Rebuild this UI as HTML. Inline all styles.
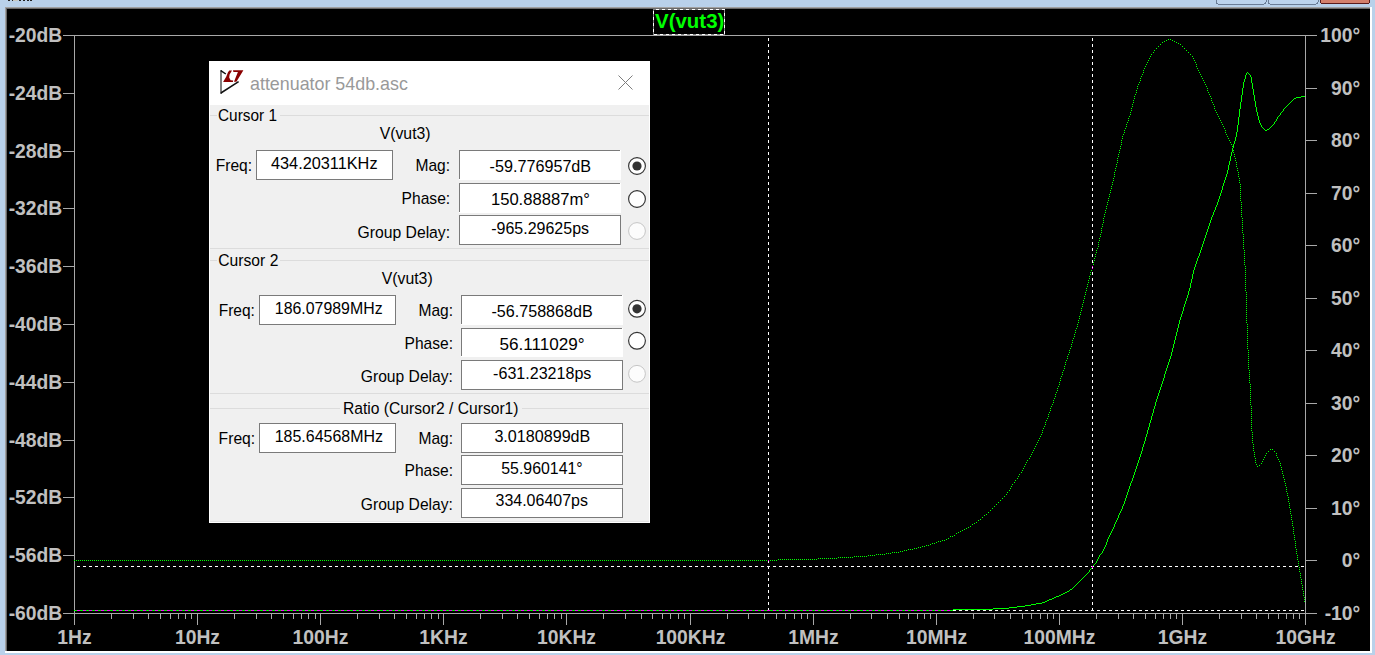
<!DOCTYPE html><html><head><meta charset="utf-8"><style>
html,body{margin:0;padding:0;}
body{width:1375px;height:655px;overflow:hidden;position:relative;background:#b9d1ea;font-family:"Liberation Sans",sans-serif;}
svg{position:absolute;left:0;top:0;}
</style></head><body>

<svg width="1375" height="655" viewBox="0 0 1375 655" shape-rendering="crispEdges">
<rect x="0" y="0" width="1375" height="655" fill="#b9d1ea"/>
<rect x="8" y="0" width="2" height="1" fill="#222"/>
<rect x="12" y="0" width="2" height="1" fill="#222"/>
<rect x="19" y="0" width="2" height="1" fill="#222"/>
<rect x="23" y="0" width="2" height="1" fill="#222"/>
<rect x="27" y="0" width="2" height="1" fill="#222"/>
<rect x="30" y="0" width="2" height="1" fill="#222"/>
<rect x="13" y="0" width="5" height="1" fill="#c8c8c0"/>
<rect x="1216" y="-4" width="50" height="8" rx="2" fill="#bcd3ec" stroke="#6b7d96" stroke-width="1"/>
<rect x="1268" y="-4" width="50" height="8" rx="2" fill="#bcd3ec" stroke="#6b7d96" stroke-width="1"/>
<rect x="1320.5" y="-4" width="49" height="7.5" rx="2" fill="#d4806c" stroke="#5a1c1c" stroke-width="1"/>
<rect x="5" y="7" width="1367" height="646" fill="#ffffff"/>
<rect x="5" y="7" width="1365" height="644" fill="#a0a0a0"/>
<rect x="6" y="8" width="1364" height="643" fill="#696969"/>
<rect x="7" y="9" width="1363" height="642" fill="#000"/>
<rect x="74" y="35" width="1232" height="1" fill="#a8a8a8"/>
<rect x="74" y="613" width="1232" height="1" fill="#a8a8a8"/>
<rect x="74" y="35" width="1" height="590" fill="#a8a8a8"/>
<rect x="1305" y="35" width="1" height="590" fill="#a8a8a8"/>
<rect x="63" y="35" width="11" height="1" fill="#a8a8a8"/>
<rect x="63" y="93" width="11" height="1" fill="#a8a8a8"/>
<rect x="63" y="151" width="11" height="1" fill="#a8a8a8"/>
<rect x="63" y="208" width="11" height="1" fill="#a8a8a8"/>
<rect x="63" y="266" width="11" height="1" fill="#a8a8a8"/>
<rect x="63" y="324" width="11" height="1" fill="#a8a8a8"/>
<rect x="63" y="382" width="11" height="1" fill="#a8a8a8"/>
<rect x="63" y="440" width="11" height="1" fill="#a8a8a8"/>
<rect x="63" y="497" width="11" height="1" fill="#a8a8a8"/>
<rect x="63" y="555" width="11" height="1" fill="#a8a8a8"/>
<rect x="63" y="613" width="11" height="1" fill="#a8a8a8"/>
<rect x="1306" y="35" width="11" height="1" fill="#a8a8a8"/>
<rect x="1306" y="88" width="11" height="1" fill="#a8a8a8"/>
<rect x="1306" y="140" width="11" height="1" fill="#a8a8a8"/>
<rect x="1306" y="193" width="11" height="1" fill="#a8a8a8"/>
<rect x="1306" y="245" width="11" height="1" fill="#a8a8a8"/>
<rect x="1306" y="298" width="11" height="1" fill="#a8a8a8"/>
<rect x="1306" y="350" width="11" height="1" fill="#a8a8a8"/>
<rect x="1306" y="403" width="11" height="1" fill="#a8a8a8"/>
<rect x="1306" y="455" width="11" height="1" fill="#a8a8a8"/>
<rect x="1306" y="508" width="11" height="1" fill="#a8a8a8"/>
<rect x="1306" y="560" width="11" height="1" fill="#a8a8a8"/>
<rect x="1306" y="613" width="11" height="1" fill="#a8a8a8"/>
<rect x="74" y="613" width="1" height="12" fill="#a8a8a8"/>
<rect x="111" y="614" width="1" height="5" fill="#a8a8a8"/>
<rect x="133" y="614" width="1" height="5" fill="#a8a8a8"/>
<rect x="148" y="614" width="1" height="5" fill="#a8a8a8"/>
<rect x="160" y="614" width="1" height="5" fill="#a8a8a8"/>
<rect x="170" y="614" width="1" height="5" fill="#a8a8a8"/>
<rect x="178" y="614" width="1" height="5" fill="#a8a8a8"/>
<rect x="185" y="614" width="1" height="5" fill="#a8a8a8"/>
<rect x="191" y="614" width="1" height="5" fill="#a8a8a8"/>
<rect x="197" y="613" width="1" height="12" fill="#a8a8a8"/>
<rect x="234" y="614" width="1" height="5" fill="#a8a8a8"/>
<rect x="256" y="614" width="1" height="5" fill="#a8a8a8"/>
<rect x="271" y="614" width="1" height="5" fill="#a8a8a8"/>
<rect x="283" y="614" width="1" height="5" fill="#a8a8a8"/>
<rect x="293" y="614" width="1" height="5" fill="#a8a8a8"/>
<rect x="301" y="614" width="1" height="5" fill="#a8a8a8"/>
<rect x="308" y="614" width="1" height="5" fill="#a8a8a8"/>
<rect x="315" y="614" width="1" height="5" fill="#a8a8a8"/>
<rect x="320" y="613" width="1" height="12" fill="#a8a8a8"/>
<rect x="357" y="614" width="1" height="5" fill="#a8a8a8"/>
<rect x="379" y="614" width="1" height="5" fill="#a8a8a8"/>
<rect x="394" y="614" width="1" height="5" fill="#a8a8a8"/>
<rect x="406" y="614" width="1" height="5" fill="#a8a8a8"/>
<rect x="416" y="614" width="1" height="5" fill="#a8a8a8"/>
<rect x="424" y="614" width="1" height="5" fill="#a8a8a8"/>
<rect x="431" y="614" width="1" height="5" fill="#a8a8a8"/>
<rect x="438" y="614" width="1" height="5" fill="#a8a8a8"/>
<rect x="443" y="613" width="1" height="12" fill="#a8a8a8"/>
<rect x="480" y="614" width="1" height="5" fill="#a8a8a8"/>
<rect x="502" y="614" width="1" height="5" fill="#a8a8a8"/>
<rect x="517" y="614" width="1" height="5" fill="#a8a8a8"/>
<rect x="529" y="614" width="1" height="5" fill="#a8a8a8"/>
<rect x="539" y="614" width="1" height="5" fill="#a8a8a8"/>
<rect x="547" y="614" width="1" height="5" fill="#a8a8a8"/>
<rect x="554" y="614" width="1" height="5" fill="#a8a8a8"/>
<rect x="561" y="614" width="1" height="5" fill="#a8a8a8"/>
<rect x="566" y="613" width="1" height="12" fill="#a8a8a8"/>
<rect x="603" y="614" width="1" height="5" fill="#a8a8a8"/>
<rect x="625" y="614" width="1" height="5" fill="#a8a8a8"/>
<rect x="641" y="614" width="1" height="5" fill="#a8a8a8"/>
<rect x="652" y="614" width="1" height="5" fill="#a8a8a8"/>
<rect x="662" y="614" width="1" height="5" fill="#a8a8a8"/>
<rect x="670" y="614" width="1" height="5" fill="#a8a8a8"/>
<rect x="678" y="614" width="1" height="5" fill="#a8a8a8"/>
<rect x="684" y="614" width="1" height="5" fill="#a8a8a8"/>
<rect x="690" y="613" width="1" height="12" fill="#a8a8a8"/>
<rect x="727" y="614" width="1" height="5" fill="#a8a8a8"/>
<rect x="748" y="614" width="1" height="5" fill="#a8a8a8"/>
<rect x="764" y="614" width="1" height="5" fill="#a8a8a8"/>
<rect x="776" y="614" width="1" height="5" fill="#a8a8a8"/>
<rect x="785" y="614" width="1" height="5" fill="#a8a8a8"/>
<rect x="794" y="614" width="1" height="5" fill="#a8a8a8"/>
<rect x="801" y="614" width="1" height="5" fill="#a8a8a8"/>
<rect x="807" y="614" width="1" height="5" fill="#a8a8a8"/>
<rect x="813" y="613" width="1" height="12" fill="#a8a8a8"/>
<rect x="850" y="614" width="1" height="5" fill="#a8a8a8"/>
<rect x="871" y="614" width="1" height="5" fill="#a8a8a8"/>
<rect x="887" y="614" width="1" height="5" fill="#a8a8a8"/>
<rect x="899" y="614" width="1" height="5" fill="#a8a8a8"/>
<rect x="908" y="614" width="1" height="5" fill="#a8a8a8"/>
<rect x="917" y="614" width="1" height="5" fill="#a8a8a8"/>
<rect x="924" y="614" width="1" height="5" fill="#a8a8a8"/>
<rect x="930" y="614" width="1" height="5" fill="#a8a8a8"/>
<rect x="936" y="613" width="1" height="12" fill="#a8a8a8"/>
<rect x="973" y="614" width="1" height="5" fill="#a8a8a8"/>
<rect x="994" y="614" width="1" height="5" fill="#a8a8a8"/>
<rect x="1010" y="614" width="1" height="5" fill="#a8a8a8"/>
<rect x="1022" y="614" width="1" height="5" fill="#a8a8a8"/>
<rect x="1031" y="614" width="1" height="5" fill="#a8a8a8"/>
<rect x="1040" y="614" width="1" height="5" fill="#a8a8a8"/>
<rect x="1047" y="614" width="1" height="5" fill="#a8a8a8"/>
<rect x="1053" y="614" width="1" height="5" fill="#a8a8a8"/>
<rect x="1059" y="613" width="1" height="12" fill="#a8a8a8"/>
<rect x="1096" y="614" width="1" height="5" fill="#a8a8a8"/>
<rect x="1118" y="614" width="1" height="5" fill="#a8a8a8"/>
<rect x="1133" y="614" width="1" height="5" fill="#a8a8a8"/>
<rect x="1145" y="614" width="1" height="5" fill="#a8a8a8"/>
<rect x="1155" y="614" width="1" height="5" fill="#a8a8a8"/>
<rect x="1163" y="614" width="1" height="5" fill="#a8a8a8"/>
<rect x="1170" y="614" width="1" height="5" fill="#a8a8a8"/>
<rect x="1176" y="614" width="1" height="5" fill="#a8a8a8"/>
<rect x="1182" y="613" width="1" height="12" fill="#a8a8a8"/>
<rect x="1219" y="614" width="1" height="5" fill="#a8a8a8"/>
<rect x="1241" y="614" width="1" height="5" fill="#a8a8a8"/>
<rect x="1256" y="614" width="1" height="5" fill="#a8a8a8"/>
<rect x="1268" y="614" width="1" height="5" fill="#a8a8a8"/>
<rect x="1278" y="614" width="1" height="5" fill="#a8a8a8"/>
<rect x="1286" y="614" width="1" height="5" fill="#a8a8a8"/>
<rect x="1293" y="614" width="1" height="5" fill="#a8a8a8"/>
<rect x="1299" y="614" width="1" height="5" fill="#a8a8a8"/>
<rect x="1305" y="613" width="1" height="12" fill="#a8a8a8"/>
<path d="M1247 72h1v1h-1zM1246 73h1v1h-1zM1248 73h1v1h-1zM1246 74h1v1h-1zM1249 74h1v1h-1zM1245 75h1v1h-1zM1250 75h1v1h-1zM1245 76h1v1h-1zM1250 76h1v1h-1zM1245 77h1v1h-1zM1251 77h1v1h-1zM1245 78h1v1h-1zM1251 78h1v1h-1zM1244 79h1v1h-1zM1251 79h1v1h-1zM1244 80h1v1h-1zM1251 80h1v1h-1zM1244 81h1v1h-1zM1251 81h1v1h-1zM1243 82h1v1h-1zM1251 82h1v1h-1zM1243 83h1v1h-1zM1252 83h1v1h-1zM1243 84h1v1h-1zM1252 84h1v1h-1zM1243 85h1v1h-1zM1252 85h1v1h-1zM1243 86h1v1h-1zM1252 86h1v1h-1zM1243 87h1v1h-1zM1252 87h1v1h-1zM1242 88h1v1h-1zM1252 88h1v1h-1zM1242 89h1v1h-1zM1253 89h1v1h-1zM1242 90h1v1h-1zM1253 90h1v1h-1zM1242 91h1v1h-1zM1253 91h1v1h-1zM1242 92h1v1h-1zM1253 92h1v1h-1zM1242 93h1v1h-1zM1253 93h1v1h-1zM1242 94h1v1h-1zM1253 94h1v1h-1zM1241 95h1v1h-1zM1254 95h1v1h-1zM1241 96h1v1h-1zM1254 96h1v1h-1zM1301 96h4v1h-4zM1241 97h1v1h-1zM1254 97h1v1h-1zM1296 97h5v1h-5zM1241 98h1v1h-1zM1254 98h1v1h-1zM1294 98h2v1h-2zM1241 99h1v1h-1zM1254 99h1v1h-1zM1293 99h1v1h-1zM1241 100h1v1h-1zM1254 100h1v1h-1zM1292 100h1v1h-1zM1241 101h1v1h-1zM1255 101h1v1h-1zM1291 101h1v1h-1zM1240 102h1v1h-1zM1255 102h1v1h-1zM1290 102h1v1h-1zM1240 103h1v1h-1zM1255 103h1v1h-1zM1289 103h1v1h-1zM1240 104h1v1h-1zM1255 104h1v1h-1zM1288 104h1v1h-1zM1240 105h1v1h-1zM1255 105h1v1h-1zM1287 105h1v1h-1zM1240 106h1v1h-1zM1255 106h1v1h-1zM1286 106h1v1h-1zM1240 107h1v1h-1zM1256 107h1v1h-1zM1285 107h1v1h-1zM1240 108h1v1h-1zM1256 108h1v1h-1zM1284 108h1v1h-1zM1239 109h1v1h-1zM1256 109h1v1h-1zM1283 109h1v1h-1zM1239 110h1v1h-1zM1256 110h1v1h-1zM1283 110h1v1h-1zM1239 111h1v1h-1zM1256 111h1v1h-1zM1282 111h1v1h-1zM1239 112h1v1h-1zM1257 112h1v1h-1zM1281 112h1v1h-1zM1239 113h1v1h-1zM1257 113h1v1h-1zM1280 113h1v1h-1zM1239 114h1v1h-1zM1257 114h1v1h-1zM1280 114h1v1h-1zM1239 115h1v1h-1zM1257 115h1v1h-1zM1279 115h1v1h-1zM1239 116h1v1h-1zM1258 116h1v1h-1zM1278 116h1v1h-1zM1238 117h1v1h-1zM1258 117h1v1h-1zM1277 117h1v1h-1zM1238 118h1v1h-1zM1258 118h1v1h-1zM1277 118h1v1h-1zM1238 119h1v1h-1zM1258 119h1v1h-1zM1276 119h1v1h-1zM1238 120h1v1h-1zM1259 120h1v1h-1zM1276 120h1v1h-1zM1238 121h1v1h-1zM1259 121h1v1h-1zM1275 121h1v1h-1zM1238 122h1v1h-1zM1259 122h1v1h-1zM1274 122h1v1h-1zM1238 123h1v1h-1zM1260 123h1v1h-1zM1274 123h1v1h-1zM1238 124h1v1h-1zM1260 124h1v1h-1zM1273 124h1v1h-1zM1237 125h1v1h-1zM1261 125h1v1h-1zM1272 125h1v1h-1zM1237 126h1v1h-1zM1261 126h1v1h-1zM1271 126h1v1h-1zM1237 127h1v1h-1zM1262 127h1v1h-1zM1270 127h1v1h-1zM1237 128h1v1h-1zM1263 128h1v1h-1zM1269 128h1v1h-1zM1237 129h1v1h-1zM1264 129h1v1h-1zM1267 129h2v1h-2zM1237 130h1v1h-1zM1265 130h2v1h-2zM1237 131h1v1h-1zM1236 132h1v1h-1zM1236 133h1v1h-1zM1236 134h1v1h-1zM1236 135h1v1h-1zM1236 136h1v1h-1zM1235 137h1v1h-1zM1235 138h1v1h-1zM1235 139h1v1h-1zM1235 140h1v1h-1zM1234 141h1v1h-1zM1234 142h1v1h-1zM1234 143h1v1h-1zM1233 144h1v1h-1zM1233 145h1v1h-1zM1233 146h1v1h-1zM1233 147h1v1h-1zM1232 148h1v1h-1zM1232 149h1v1h-1zM1232 150h1v1h-1zM1232 151h1v1h-1zM1231 152h1v1h-1zM1231 153h1v1h-1zM1231 154h1v1h-1zM1231 155h1v1h-1zM1230 156h1v1h-1zM1230 157h1v1h-1zM1230 158h1v1h-1zM1230 159h1v1h-1zM1230 160h1v1h-1zM1229 161h1v1h-1zM1229 162h1v1h-1zM1229 163h1v1h-1zM1229 164h1v1h-1zM1228 165h1v1h-1zM1228 166h1v1h-1zM1228 167h1v1h-1zM1228 168h1v1h-1zM1228 169h1v1h-1zM1227 170h1v1h-1zM1227 171h1v1h-1zM1227 172h1v1h-1zM1227 173h1v1h-1zM1226 174h1v1h-1zM1226 175h1v1h-1zM1226 176h1v1h-1zM1225 177h1v1h-1zM1225 178h1v1h-1zM1225 179h1v1h-1zM1224 180h1v1h-1zM1224 181h1v1h-1zM1224 182h1v1h-1zM1223 183h1v1h-1zM1223 184h1v1h-1zM1223 185h1v1h-1zM1222 186h1v1h-1zM1222 187h1v1h-1zM1222 188h1v1h-1zM1222 189h1v1h-1zM1221 190h1v1h-1zM1221 191h1v1h-1zM1221 192h1v1h-1zM1220 193h1v1h-1zM1220 194h1v1h-1zM1220 195h1v1h-1zM1219 196h1v1h-1zM1219 197h1v1h-1zM1219 198h1v1h-1zM1218 199h1v1h-1zM1218 200h1v1h-1zM1218 201h1v1h-1zM1217 202h1v1h-1zM1217 203h1v1h-1zM1217 204h1v1h-1zM1216 205h1v1h-1zM1216 206h1v1h-1zM1215 207h1v1h-1zM1215 208h1v1h-1zM1215 209h1v1h-1zM1214 210h1v1h-1zM1214 211h1v1h-1zM1213 212h1v1h-1zM1213 213h1v1h-1zM1213 214h1v1h-1zM1212 215h1v1h-1zM1212 216h1v1h-1zM1211 217h1v1h-1zM1211 218h1v1h-1zM1211 219h1v1h-1zM1210 220h1v1h-1zM1210 221h1v1h-1zM1210 222h1v1h-1zM1209 223h1v1h-1zM1209 224h1v1h-1zM1209 225h1v1h-1zM1208 226h1v1h-1zM1208 227h1v1h-1zM1208 228h1v1h-1zM1207 229h1v1h-1zM1207 230h1v1h-1zM1207 231h1v1h-1zM1206 232h1v1h-1zM1206 233h1v1h-1zM1206 234h1v1h-1zM1205 235h1v1h-1zM1205 236h1v1h-1zM1205 237h1v1h-1zM1204 238h1v1h-1zM1204 239h1v1h-1zM1204 240h1v1h-1zM1203 241h1v1h-1zM1203 242h1v1h-1zM1203 243h1v1h-1zM1202 244h1v1h-1zM1202 245h1v1h-1zM1202 246h1v1h-1zM1201 247h1v1h-1zM1201 248h1v1h-1zM1201 249h1v1h-1zM1200 250h1v1h-1zM1200 251h1v1h-1zM1200 252h1v1h-1zM1199 253h1v1h-1zM1199 254h1v1h-1zM1199 255h1v1h-1zM1198 256h1v1h-1zM1198 257h1v1h-1zM1197 258h1v1h-1zM1197 259h1v1h-1zM1197 260h1v1h-1zM1196 261h1v1h-1zM1196 262h1v1h-1zM1196 263h1v1h-1zM1195 264h1v1h-1zM1195 265h1v1h-1zM1195 266h1v1h-1zM1194 267h1v1h-1zM1194 268h1v1h-1zM1194 269h1v1h-1zM1193 270h1v1h-1zM1193 271h1v1h-1zM1193 272h1v1h-1zM1193 273h1v1h-1zM1192 274h1v1h-1zM1192 275h1v1h-1zM1192 276h1v1h-1zM1192 277h1v1h-1zM1192 278h1v1h-1zM1191 279h1v1h-1zM1191 280h1v1h-1zM1191 281h1v1h-1zM1191 282h1v1h-1zM1190 283h1v1h-1zM1190 284h1v1h-1zM1190 285h1v1h-1zM1190 286h1v1h-1zM1190 287h1v1h-1zM1189 288h1v1h-1zM1189 289h1v1h-1zM1189 290h1v1h-1zM1188 291h1v1h-1zM1188 292h1v1h-1zM1188 293h1v1h-1zM1188 294h1v1h-1zM1187 295h1v1h-1zM1187 296h1v1h-1zM1187 297h1v1h-1zM1186 298h1v1h-1zM1186 299h1v1h-1zM1186 300h1v1h-1zM1185 301h1v1h-1zM1185 302h1v1h-1zM1185 303h1v1h-1zM1184 304h1v1h-1zM1184 305h1v1h-1zM1184 306h1v1h-1zM1183 307h1v1h-1zM1183 308h1v1h-1zM1183 309h1v1h-1zM1183 310h1v1h-1zM1182 311h1v1h-1zM1182 312h1v1h-1zM1182 313h1v1h-1zM1181 314h1v1h-1zM1181 315h1v1h-1zM1181 316h1v1h-1zM1180 317h1v1h-1zM1180 318h1v1h-1zM1180 319h1v1h-1zM1179 320h1v1h-1zM1179 321h1v1h-1zM1179 322h1v1h-1zM1179 323h1v1h-1zM1178 324h1v1h-1zM1178 325h1v1h-1zM1178 326h1v1h-1zM1178 327h1v1h-1zM1177 328h1v1h-1zM1177 329h1v1h-1zM1177 330h1v1h-1zM1177 331h1v1h-1zM1176 332h1v1h-1zM1176 333h1v1h-1zM1176 334h1v1h-1zM1176 335h1v1h-1zM1175 336h1v1h-1zM1175 337h1v1h-1zM1175 338h1v1h-1zM1175 339h1v1h-1zM1174 340h1v1h-1zM1174 341h1v1h-1zM1174 342h1v1h-1zM1174 343h1v1h-1zM1173 344h1v1h-1zM1173 345h1v1h-1zM1173 346h1v1h-1zM1173 347h1v1h-1zM1172 348h1v1h-1zM1172 349h1v1h-1zM1172 350h1v1h-1zM1172 351h1v1h-1zM1171 352h1v1h-1zM1171 353h1v1h-1zM1171 354h1v1h-1zM1171 355h1v1h-1zM1170 356h1v1h-1zM1170 357h1v1h-1zM1170 358h1v1h-1zM1169 359h1v1h-1zM1169 360h1v1h-1zM1169 361h1v1h-1zM1168 362h1v1h-1zM1168 363h1v1h-1zM1168 364h1v1h-1zM1167 365h1v1h-1zM1167 366h1v1h-1zM1167 367h1v1h-1zM1166 368h1v1h-1zM1166 369h1v1h-1zM1166 370h1v1h-1zM1165 371h1v1h-1zM1165 372h1v1h-1zM1165 373h1v1h-1zM1164 374h1v1h-1zM1164 375h1v1h-1zM1164 376h1v1h-1zM1164 377h1v1h-1zM1163 378h1v1h-1zM1163 379h1v1h-1zM1163 380h1v1h-1zM1162 381h1v1h-1zM1162 382h1v1h-1zM1162 383h1v1h-1zM1161 384h1v1h-1zM1161 385h1v1h-1zM1161 386h1v1h-1zM1160 387h1v1h-1zM1160 388h1v1h-1zM1160 389h1v1h-1zM1159 390h1v1h-1zM1159 391h1v1h-1zM1159 392h1v1h-1zM1158 393h1v1h-1zM1158 394h1v1h-1zM1158 395h1v1h-1zM1157 396h1v1h-1zM1157 397h1v1h-1zM1157 398h1v1h-1zM1156 399h1v1h-1zM1156 400h1v1h-1zM1156 401h1v1h-1zM1155 402h1v1h-1zM1155 403h1v1h-1zM1155 404h1v1h-1zM1155 405h1v1h-1zM1154 406h1v1h-1zM1154 407h1v1h-1zM1154 408h1v1h-1zM1153 409h1v1h-1zM1153 410h1v1h-1zM1153 411h1v1h-1zM1153 412h1v1h-1zM1152 413h1v1h-1zM1152 414h1v1h-1zM1152 415h1v1h-1zM1151 416h1v1h-1zM1151 417h1v1h-1zM1151 418h1v1h-1zM1151 419h1v1h-1zM1150 420h1v1h-1zM1150 421h1v1h-1zM1150 422h1v1h-1zM1149 423h1v1h-1zM1149 424h1v1h-1zM1149 425h1v1h-1zM1149 426h1v1h-1zM1148 427h1v1h-1zM1148 428h1v1h-1zM1148 429h1v1h-1zM1147 430h1v1h-1zM1147 431h1v1h-1zM1147 432h1v1h-1zM1147 433h1v1h-1zM1146 434h1v1h-1zM1146 435h1v1h-1zM1146 436h1v1h-1zM1145 437h1v1h-1zM1145 438h1v1h-1zM1145 439h1v1h-1zM1145 440h1v1h-1zM1144 441h1v1h-1zM1144 442h1v1h-1zM1144 443h1v1h-1zM1143 444h1v1h-1zM1143 445h1v1h-1zM1143 446h1v1h-1zM1142 447h1v1h-1zM1142 448h1v1h-1zM1142 449h1v1h-1zM1142 450h1v1h-1zM1141 451h1v1h-1zM1141 452h1v1h-1zM1141 453h1v1h-1zM1140 454h1v1h-1zM1140 455h1v1h-1zM1140 456h1v1h-1zM1139 457h1v1h-1zM1139 458h1v1h-1zM1139 459h1v1h-1zM1138 460h1v1h-1zM1138 461h1v1h-1zM1138 462h1v1h-1zM1137 463h1v1h-1zM1137 464h1v1h-1zM1137 465h1v1h-1zM1136 466h1v1h-1zM1136 467h1v1h-1zM1136 468h1v1h-1zM1135 469h1v1h-1zM1135 470h1v1h-1zM1135 471h1v1h-1zM1134 472h1v1h-1zM1134 473h1v1h-1zM1134 474h1v1h-1zM1133 475h1v1h-1zM1133 476h1v1h-1zM1133 477h1v1h-1zM1132 478h1v1h-1zM1132 479h1v1h-1zM1132 480h1v1h-1zM1131 481h1v1h-1zM1131 482h1v1h-1zM1130 483h1v1h-1zM1130 484h1v1h-1zM1130 485h1v1h-1zM1129 486h1v1h-1zM1129 487h1v1h-1zM1129 488h1v1h-1zM1128 489h1v1h-1zM1128 490h1v1h-1zM1128 491h1v1h-1zM1127 492h1v1h-1zM1127 493h1v1h-1zM1127 494h1v1h-1zM1126 495h1v1h-1zM1126 496h1v1h-1zM1126 497h1v1h-1zM1125 498h1v1h-1zM1125 499h1v1h-1zM1125 500h1v1h-1zM1124 501h1v1h-1zM1124 502h1v1h-1zM1124 503h1v1h-1zM1123 504h1v1h-1zM1123 505h1v1h-1zM1122 506h1v1h-1zM1122 507h1v1h-1zM1122 508h1v1h-1zM1121 509h1v1h-1zM1121 510h1v1h-1zM1120 511h1v1h-1zM1120 512h1v1h-1zM1119 513h1v1h-1zM1119 514h1v1h-1zM1118 515h1v1h-1zM1118 516h1v1h-1zM1118 517h1v1h-1zM1117 518h1v1h-1zM1117 519h1v1h-1zM1116 520h1v1h-1zM1116 521h1v1h-1zM1115 522h1v1h-1zM1115 523h1v1h-1zM1114 524h1v1h-1zM1114 525h1v1h-1zM1114 526h1v1h-1zM1113 527h1v1h-1zM1113 528h1v1h-1zM1112 529h1v1h-1zM1112 530h1v1h-1zM1111 531h1v1h-1zM1111 532h1v1h-1zM1110 533h1v1h-1zM1110 534h1v1h-1zM1109 535h1v1h-1zM1109 536h1v1h-1zM1108 537h1v1h-1zM1108 538h1v1h-1zM1107 539h1v1h-1zM1107 540h1v1h-1zM1107 541h1v1h-1zM1106 542h1v1h-1zM1106 543h1v1h-1zM1106 544h1v1h-1zM1105 545h1v1h-1zM1105 546h1v1h-1zM1104 547h1v1h-1zM1104 548h1v1h-1zM1103 549h1v1h-1zM1103 550h1v1h-1zM1102 551h1v1h-1zM1102 552h1v1h-1zM1101 553h1v1h-1zM1100 554h1v1h-1zM1099 555h1v1h-1zM1099 556h1v1h-1zM1098 557h1v1h-1zM1098 558h1v1h-1zM1097 559h1v1h-1zM1097 560h1v1h-1zM1096 561h1v1h-1zM1096 562h1v1h-1zM1095 563h1v1h-1zM1094 564h1v1h-1zM1093 565h1v1h-1zM1092 566h1v1h-1zM1092 567h1v1h-1zM1091 568h1v1h-1zM1090 569h1v1h-1zM1089 570h1v1h-1zM1089 571h1v1h-1zM1088 572h1v1h-1zM1087 573h1v1h-1zM1086 574h1v1h-1zM1085 575h1v1h-1zM1084 576h1v1h-1zM1083 577h1v1h-1zM1082 578h1v1h-1zM1081 579h1v1h-1zM1080 580h1v1h-1zM1079 581h1v1h-1zM1078 582h1v1h-1zM1077 583h1v1h-1zM1076 584h1v1h-1zM1075 585h1v1h-1zM1074 586h1v1h-1zM1073 587h1v1h-1zM1072 588h1v1h-1zM1070 589h2v1h-2zM1069 590h1v1h-1zM1067 591h2v1h-2zM1065 592h2v1h-2zM1063 593h2v1h-2zM1061 594h2v1h-2zM1059 595h2v1h-2zM1056 596h3v1h-3zM1054 597h2v1h-2zM1052 598h2v1h-2zM1049 599h3v1h-3zM1047 600h2v1h-2zM1045 601h2v1h-2zM1042 602h3v1h-3zM1036 603h6v1h-6zM1031 604h5v1h-5zM1025 605h6v1h-6zM1017 606h8v1h-8zM1009 607h8v1h-8zM993 608h16v1h-16zM953 609h40v1h-40zM74 610h879v1h-879z" fill="#00ff00"/>
<path d="M1168 39h1v1h-1zM1170 39h1v1h-1zM1166 40h1v1h-1zM1172 40h1v1h-1zM1164 41h1v1h-1zM1174 41h1v1h-1zM1162 42h1v1h-1zM1176 42h1v1h-1zM1178 43h1v1h-1zM1160 44h1v1h-1zM1180 44h1v1h-1zM1158 46h1v1h-1zM1182 46h1v1h-1zM1156 48h1v1h-1zM1184 48h1v1h-1zM1154 50h1v1h-1zM1186 50h1v1h-1zM1153 52h1v1h-1zM1188 52h1v1h-1zM1151 54h1v1h-1zM1190 54h1v1h-1zM1150 56h1v1h-1zM1192 56h1v1h-1zM1149 58h1v1h-1zM1193 58h1v1h-1zM1148 60h1v1h-1zM1194 60h1v1h-1zM1147 62h1v1h-1zM1195 62h1v1h-1zM1146 64h1v1h-1zM1196 64h1v1h-1zM1145 66h1v1h-1zM1196 66h1v1h-1zM1144 68h1v1h-1zM1197 68h1v1h-1zM1143 70h1v1h-1zM1198 70h1v1h-1zM1143 72h1v1h-1zM1199 72h1v1h-1zM1142 74h1v1h-1zM1200 74h1v1h-1zM1141 76h1v1h-1zM1201 76h1v1h-1zM1140 78h1v1h-1zM1202 78h1v1h-1zM1140 80h1v1h-1zM1203 80h1v1h-1zM1139 82h1v1h-1zM1204 82h1v1h-1zM1138 84h1v1h-1zM1205 84h1v1h-1zM1137 86h1v1h-1zM1206 86h1v1h-1zM1137 88h1v1h-1zM1207 88h1v1h-1zM1136 90h1v1h-1zM1207 90h1v1h-1zM1136 92h1v1h-1zM1208 92h1v1h-1zM1135 94h1v1h-1zM1209 94h1v1h-1zM1134 96h1v1h-1zM1210 96h1v1h-1zM1134 98h1v1h-1zM1211 98h1v1h-1zM1133 100h1v1h-1zM1211 100h1v1h-1zM1133 102h1v1h-1zM1212 102h1v1h-1zM1132 104h1v1h-1zM1213 104h1v1h-1zM1132 106h1v1h-1zM1214 106h1v1h-1zM1131 108h1v1h-1zM1214 108h1v1h-1zM1131 110h1v1h-1zM1215 110h1v1h-1zM1130 112h1v1h-1zM1216 112h1v1h-1zM1130 114h1v1h-1zM1217 114h1v1h-1zM1129 116h1v1h-1zM1218 116h1v1h-1zM1128 118h1v1h-1zM1219 118h1v1h-1zM1128 120h1v1h-1zM1220 120h1v1h-1zM1127 122h1v1h-1zM1221 122h1v1h-1zM1126 124h1v1h-1zM1222 124h1v1h-1zM1126 126h1v1h-1zM1223 126h1v1h-1zM1125 128h1v1h-1zM1224 128h1v1h-1zM1124 130h1v1h-1zM1225 130h1v1h-1zM1124 132h1v1h-1zM1225 132h1v1h-1zM1123 134h1v1h-1zM1226 134h1v1h-1zM1122 136h1v1h-1zM1227 136h1v1h-1zM1122 138h1v1h-1zM1228 138h1v1h-1zM1121 140h1v1h-1zM1229 140h1v1h-1zM1121 142h1v1h-1zM1230 142h1v1h-1zM1121 144h1v1h-1zM1231 144h1v1h-1zM1120 146h1v1h-1zM1232 146h1v1h-1zM1120 148h1v1h-1zM1232 148h1v1h-1zM1119 150h1v1h-1zM1233 150h1v1h-1zM1119 152h1v1h-1zM1233 152h1v1h-1zM1118 154h1v1h-1zM1234 154h1v1h-1zM1118 156h1v1h-1zM1234 156h1v1h-1zM1117 158h1v1h-1zM1235 158h1v1h-1zM1117 160h1v1h-1zM1235 160h1v1h-1zM1117 162h1v1h-1zM1236 162h1v1h-1zM1116 164h1v1h-1zM1236 164h1v1h-1zM1116 166h1v1h-1zM1236 166h1v1h-1zM1115 168h1v1h-1zM1237 168h1v1h-1zM1115 170h1v1h-1zM1237 170h1v1h-1zM1114 172h1v1h-1zM1238 172h1v1h-1zM1114 174h1v1h-1zM1238 174h1v1h-1zM1114 176h1v1h-1zM1238 176h1v1h-1zM1113 178h1v1h-1zM1239 178h1v1h-1zM1113 180h1v1h-1zM1239 180h1v1h-1zM1112 182h1v1h-1zM1239 182h1v1h-1zM1112 184h1v1h-1zM1240 184h1v1h-1zM1111 186h1v1h-1zM1240 186h1v1h-1zM1111 188h1v1h-1zM1240 188h1v1h-1zM1110 190h1v1h-1zM1240 190h1v1h-1zM1110 192h1v1h-1zM1240 192h1v1h-1zM1109 194h1v1h-1zM1240 194h1v1h-1zM1109 196h1v1h-1zM1240 196h1v1h-1zM1108 198h1v1h-1zM1240 198h1v1h-1zM1108 200h1v1h-1zM1240 200h1v1h-1zM1107 202h1v1h-1zM1241 202h1v1h-1zM1107 204h1v1h-1zM1241 204h1v1h-1zM1106 206h1v1h-1zM1241 206h1v1h-1zM1106 208h1v1h-1zM1241 208h1v1h-1zM1105 210h1v1h-1zM1241 210h1v1h-1zM1105 212h1v1h-1zM1241 212h1v1h-1zM1104 214h1v1h-1zM1241 214h1v1h-1zM1104 216h1v1h-1zM1241 216h1v1h-1zM1103 218h1v1h-1zM1242 218h1v1h-1zM1103 220h1v1h-1zM1242 220h1v1h-1zM1103 222h1v1h-1zM1242 222h1v1h-1zM1102 224h1v1h-1zM1242 224h1v1h-1zM1102 226h1v1h-1zM1242 226h1v1h-1zM1101 228h1v1h-1zM1242 228h1v1h-1zM1101 230h1v1h-1zM1242 230h1v1h-1zM1101 232h1v1h-1zM1242 232h1v1h-1zM1100 234h1v1h-1zM1243 234h1v1h-1zM1100 236h1v1h-1zM1243 236h1v1h-1zM1099 238h1v1h-1zM1243 238h1v1h-1zM1099 240h1v1h-1zM1243 240h1v1h-1zM1098 242h1v1h-1zM1243 242h1v1h-1zM1098 244h1v1h-1zM1243 244h1v1h-1zM1098 246h1v1h-1zM1243 246h1v1h-1zM1097 248h1v1h-1zM1243 248h1v1h-1zM1096 250h1v1h-1zM1244 250h1v1h-1zM1096 252h1v1h-1zM1244 252h1v1h-1zM1095 254h1v1h-1zM1244 254h1v1h-1zM1095 256h1v1h-1zM1244 256h1v1h-1zM1094 258h1v1h-1zM1244 258h1v1h-1zM1094 260h1v1h-1zM1244 260h1v1h-1zM1093 262h1v1h-1zM1244 262h1v1h-1zM1093 264h1v1h-1zM1244 264h1v1h-1zM1092 266h1v1h-1zM1245 266h1v1h-1zM1092 268h1v1h-1zM1245 268h1v1h-1zM1091 270h1v1h-1zM1245 270h1v1h-1zM1090 272h1v1h-1zM1245 272h1v1h-1zM1090 274h1v1h-1zM1245 274h1v1h-1zM1089 276h1v1h-1zM1245 276h1v1h-1zM1089 278h1v1h-1zM1245 278h1v1h-1zM1088 280h1v1h-1zM1245 280h1v1h-1zM1088 282h1v1h-1zM1245 282h1v1h-1zM1087 284h1v1h-1zM1245 284h1v1h-1zM1087 286h1v1h-1zM1245 286h1v1h-1zM1086 288h1v1h-1zM1245 288h1v1h-1zM1086 290h1v1h-1zM1245 290h1v1h-1zM1085 292h1v1h-1zM1246 292h1v1h-1zM1085 294h1v1h-1zM1246 294h1v1h-1zM1084 296h1v1h-1zM1246 296h1v1h-1zM1084 298h1v1h-1zM1246 298h1v1h-1zM1083 300h1v1h-1zM1246 300h1v1h-1zM1083 302h1v1h-1zM1246 302h1v1h-1zM1082 304h1v1h-1zM1246 304h1v1h-1zM1082 306h1v1h-1zM1246 306h1v1h-1zM1081 308h1v1h-1zM1246 308h1v1h-1zM1081 310h1v1h-1zM1246 310h1v1h-1zM1080 312h1v1h-1zM1246 312h1v1h-1zM1080 314h1v1h-1zM1246 314h1v1h-1zM1079 316h1v1h-1zM1246 316h1v1h-1zM1079 318h1v1h-1zM1246 318h1v1h-1zM1078 320h1v1h-1zM1246 320h1v1h-1zM1078 322h1v1h-1zM1246 322h1v1h-1zM1077 324h1v1h-1zM1247 324h1v1h-1zM1077 326h1v1h-1zM1247 326h1v1h-1zM1076 328h1v1h-1zM1247 328h1v1h-1zM1075 330h1v1h-1zM1247 330h1v1h-1zM1075 332h1v1h-1zM1247 332h1v1h-1zM1074 334h1v1h-1zM1247 334h1v1h-1zM1074 336h1v1h-1zM1247 336h1v1h-1zM1073 338h1v1h-1zM1247 338h1v1h-1zM1072 340h1v1h-1zM1247 340h1v1h-1zM1072 342h1v1h-1zM1247 342h1v1h-1zM1071 344h1v1h-1zM1247 344h1v1h-1zM1071 346h1v1h-1zM1247 346h1v1h-1zM1070 348h1v1h-1zM1247 348h1v1h-1zM1069 350h1v1h-1zM1248 350h1v1h-1zM1069 352h1v1h-1zM1248 352h1v1h-1zM1068 354h1v1h-1zM1248 354h1v1h-1zM1067 356h1v1h-1zM1248 356h1v1h-1zM1067 358h1v1h-1zM1248 358h1v1h-1zM1066 360h1v1h-1zM1248 360h1v1h-1zM1065 362h1v1h-1zM1248 362h1v1h-1zM1065 364h1v1h-1zM1248 364h1v1h-1zM1064 366h1v1h-1zM1248 366h1v1h-1zM1064 368h1v1h-1zM1248 368h1v1h-1zM1063 370h1v1h-1zM1249 370h1v1h-1zM1062 372h1v1h-1zM1249 372h1v1h-1zM1062 374h1v1h-1zM1249 374h1v1h-1zM1061 376h1v1h-1zM1249 376h1v1h-1zM1060 378h1v1h-1zM1249 378h1v1h-1zM1060 380h1v1h-1zM1249 380h1v1h-1zM1059 382h1v1h-1zM1249 382h1v1h-1zM1059 384h1v1h-1zM1250 384h1v1h-1zM1058 386h1v1h-1zM1250 386h1v1h-1zM1057 388h1v1h-1zM1250 388h1v1h-1zM1057 390h1v1h-1zM1250 390h1v1h-1zM1056 392h1v1h-1zM1250 392h1v1h-1zM1055 394h1v1h-1zM1250 394h1v1h-1zM1055 396h1v1h-1zM1250 396h1v1h-1zM1054 398h1v1h-1zM1250 398h1v1h-1zM1053 400h1v1h-1zM1250 400h1v1h-1zM1053 402h1v1h-1zM1250 402h1v1h-1zM1052 404h1v1h-1zM1250 404h1v1h-1zM1051 406h1v1h-1zM1251 406h1v1h-1zM1050 408h1v1h-1zM1251 408h1v1h-1zM1050 410h1v1h-1zM1251 410h1v1h-1zM1049 412h1v1h-1zM1251 412h1v1h-1zM1048 414h1v1h-1zM1251 414h1v1h-1zM1048 416h1v1h-1zM1251 416h1v1h-1zM1047 418h1v1h-1zM1251 418h1v1h-1zM1046 420h1v1h-1zM1251 420h1v1h-1zM1045 422h1v1h-1zM1251 422h1v1h-1zM1045 424h1v1h-1zM1251 424h1v1h-1zM1044 426h1v1h-1zM1251 426h1v1h-1zM1043 428h1v1h-1zM1251 428h1v1h-1zM1042 430h1v1h-1zM1251 430h1v1h-1zM1042 432h1v1h-1zM1252 432h1v1h-1zM1041 434h1v1h-1zM1252 434h1v1h-1zM1040 436h1v1h-1zM1252 436h1v1h-1zM1039 438h1v1h-1zM1252 438h1v1h-1zM1038 440h1v1h-1zM1252 440h1v1h-1zM1037 442h1v1h-1zM1252 442h1v1h-1zM1036 444h1v1h-1zM1253 444h1v1h-1zM1035 446h1v1h-1zM1253 446h1v1h-1zM1034 448h1v1h-1zM1253 448h1v1h-1zM1270 449h1v1h-1zM1272 449h1v1h-1zM1033 450h1v1h-1zM1253 450h1v1h-1zM1268 451h1v1h-1zM1274 451h1v1h-1zM1032 452h1v1h-1zM1254 452h1v1h-1zM1266 453h1v1h-1zM1276 453h1v1h-1zM1031 454h1v1h-1zM1254 454h1v1h-1zM1265 455h1v1h-1zM1276 455h1v1h-1zM1030 456h1v1h-1zM1254 456h1v1h-1zM1264 457h1v1h-1zM1277 457h1v1h-1zM1029 458h1v1h-1zM1255 458h1v1h-1zM1263 459h1v1h-1zM1278 459h1v1h-1zM1027 460h1v1h-1zM1255 460h1v1h-1zM1262 461h1v1h-1zM1279 461h1v1h-1zM1026 462h1v1h-1zM1255 462h1v1h-1zM1261 463h1v1h-1zM1280 463h1v1h-1zM1025 464h1v1h-1zM1256 464h1v1h-1zM1259 465h1v1h-1zM1280 465h1v1h-1zM1024 466h1v1h-1zM1257 466h1v1h-1zM1281 467h1v1h-1zM1023 468h1v1h-1zM1281 469h1v1h-1zM1022 470h1v1h-1zM1282 471h1v1h-1zM1021 472h1v1h-1zM1282 473h1v1h-1zM1019 474h1v1h-1zM1283 475h1v1h-1zM1018 476h1v1h-1zM1283 477h1v1h-1zM1017 478h1v1h-1zM1284 479h1v1h-1zM1015 480h1v1h-1zM1284 481h1v1h-1zM1014 482h1v1h-1zM1285 483h1v1h-1zM1012 484h1v1h-1zM1285 485h1v1h-1zM1011 486h1v1h-1zM1286 487h1v1h-1zM1010 488h1v1h-1zM1286 489h1v1h-1zM1009 490h1v1h-1zM1286 491h1v1h-1zM1007 492h1v1h-1zM1287 493h1v1h-1zM1006 494h1v1h-1zM1287 495h1v1h-1zM1004 496h1v1h-1zM1288 497h1v1h-1zM1002 498h1v1h-1zM1288 499h1v1h-1zM1000 500h1v1h-1zM1288 501h1v1h-1zM998 502h1v1h-1zM1289 503h1v1h-1zM996 504h1v1h-1zM1289 505h1v1h-1zM994 506h1v1h-1zM1289 507h1v1h-1zM992 508h1v1h-1zM1290 509h1v1h-1zM990 510h1v1h-1zM1290 511h1v1h-1zM988 512h1v1h-1zM1290 513h1v1h-1zM986 514h1v1h-1zM984 515h1v1h-1zM1291 515h1v1h-1zM982 517h1v1h-1zM1291 517h1v1h-1zM980 519h1v1h-1zM1291 519h1v1h-1zM978 520h1v1h-1zM1292 521h1v1h-1zM976 522h1v1h-1zM974 523h1v1h-1zM1292 523h1v1h-1zM972 524h1v1h-1zM1292 525h1v1h-1zM970 526h1v1h-1zM968 527h1v1h-1zM1293 527h1v1h-1zM966 528h1v1h-1zM964 529h1v1h-1zM1293 529h1v1h-1zM962 530h1v1h-1zM960 531h1v1h-1zM1293 531h1v1h-1zM958 532h1v1h-1zM956 533h1v1h-1zM1293 533h1v1h-1zM954 535h1v1h-1zM1294 535h1v1h-1zM950 536h1v1h-1zM952 536h1v1h-1zM1294 537h1v1h-1zM948 538h1v1h-1zM946 539h1v1h-1zM1294 539h1v1h-1zM942 540h1v1h-1zM944 540h1v1h-1zM938 541h1v1h-1zM940 541h1v1h-1zM1295 541h1v1h-1zM936 542h1v1h-1zM932 543h1v1h-1zM934 543h1v1h-1zM1295 543h1v1h-1zM930 544h1v1h-1zM926 545h1v1h-1zM928 545h1v1h-1zM1295 545h1v1h-1zM922 546h1v1h-1zM924 546h1v1h-1zM918 547h1v1h-1zM920 547h1v1h-1zM1295 547h1v1h-1zM914 548h1v1h-1zM916 548h1v1h-1zM908 549h1v1h-1zM910 549h1v1h-1zM912 549h1v1h-1zM1296 549h1v1h-1zM904 550h1v1h-1zM906 550h1v1h-1zM900 551h1v1h-1zM902 551h1v1h-1zM1296 551h1v1h-1zM892 552h1v1h-1zM894 552h1v1h-1zM896 552h1v1h-1zM898 552h1v1h-1zM886 553h1v1h-1zM888 553h1v1h-1zM890 553h1v1h-1zM1296 553h1v1h-1zM876 554h1v1h-1zM878 554h1v1h-1zM880 554h1v1h-1zM882 554h1v1h-1zM884 554h1v1h-1zM868 555h1v1h-1zM870 555h1v1h-1zM872 555h1v1h-1zM874 555h1v1h-1zM1297 555h1v1h-1zM854 556h1v1h-1zM856 556h1v1h-1zM858 556h1v1h-1zM860 556h1v1h-1zM862 556h1v1h-1zM864 556h1v1h-1zM866 556h1v1h-1zM838 557h1v1h-1zM840 557h1v1h-1zM842 557h1v1h-1zM844 557h1v1h-1zM846 557h1v1h-1zM848 557h1v1h-1zM850 557h1v1h-1zM852 557h1v1h-1zM1297 557h1v1h-1zM818 558h1v1h-1zM820 558h1v1h-1zM822 558h1v1h-1zM824 558h1v1h-1zM826 558h1v1h-1zM828 558h1v1h-1zM830 558h1v1h-1zM832 558h1v1h-1zM834 558h1v1h-1zM836 558h1v1h-1zM778 559h1v1h-1zM780 559h1v1h-1zM782 559h1v1h-1zM784 559h1v1h-1zM786 559h1v1h-1zM788 559h1v1h-1zM790 559h1v1h-1zM792 559h1v1h-1zM794 559h1v1h-1zM796 559h1v1h-1zM798 559h1v1h-1zM800 559h1v1h-1zM802 559h1v1h-1zM804 559h1v1h-1zM806 559h1v1h-1zM808 559h1v1h-1zM810 559h1v1h-1zM812 559h1v1h-1zM814 559h1v1h-1zM816 559h1v1h-1zM1297 559h1v1h-1zM74 560h1v1h-1zM76 560h1v1h-1zM78 560h1v1h-1zM80 560h1v1h-1zM82 560h1v1h-1zM84 560h1v1h-1zM86 560h1v1h-1zM88 560h1v1h-1zM90 560h1v1h-1zM92 560h1v1h-1zM94 560h1v1h-1zM96 560h1v1h-1zM98 560h1v1h-1zM100 560h1v1h-1zM102 560h1v1h-1zM104 560h1v1h-1zM106 560h1v1h-1zM108 560h1v1h-1zM110 560h1v1h-1zM112 560h1v1h-1zM114 560h1v1h-1zM116 560h1v1h-1zM118 560h1v1h-1zM120 560h1v1h-1zM122 560h1v1h-1zM124 560h1v1h-1zM126 560h1v1h-1zM128 560h1v1h-1zM130 560h1v1h-1zM132 560h1v1h-1zM134 560h1v1h-1zM136 560h1v1h-1zM138 560h1v1h-1zM140 560h1v1h-1zM142 560h1v1h-1zM144 560h1v1h-1zM146 560h1v1h-1zM148 560h1v1h-1zM150 560h1v1h-1zM152 560h1v1h-1zM154 560h1v1h-1zM156 560h1v1h-1zM158 560h1v1h-1zM160 560h1v1h-1zM162 560h1v1h-1zM164 560h1v1h-1zM166 560h1v1h-1zM168 560h1v1h-1zM170 560h1v1h-1zM172 560h1v1h-1zM174 560h1v1h-1zM176 560h1v1h-1zM178 560h1v1h-1zM180 560h1v1h-1zM182 560h1v1h-1zM184 560h1v1h-1zM186 560h1v1h-1zM188 560h1v1h-1zM190 560h1v1h-1zM192 560h1v1h-1zM194 560h1v1h-1zM196 560h1v1h-1zM198 560h1v1h-1zM200 560h1v1h-1zM202 560h1v1h-1zM204 560h1v1h-1zM206 560h1v1h-1zM208 560h1v1h-1zM210 560h1v1h-1zM212 560h1v1h-1zM214 560h1v1h-1zM216 560h1v1h-1zM218 560h1v1h-1zM220 560h1v1h-1zM222 560h1v1h-1zM224 560h1v1h-1zM226 560h1v1h-1zM228 560h1v1h-1zM230 560h1v1h-1zM232 560h1v1h-1zM234 560h1v1h-1zM236 560h1v1h-1zM238 560h1v1h-1zM240 560h1v1h-1zM242 560h1v1h-1zM244 560h1v1h-1zM246 560h1v1h-1zM248 560h1v1h-1zM250 560h1v1h-1zM252 560h1v1h-1zM254 560h1v1h-1zM256 560h1v1h-1zM258 560h1v1h-1zM260 560h1v1h-1zM262 560h1v1h-1zM264 560h1v1h-1zM266 560h1v1h-1zM268 560h1v1h-1zM270 560h1v1h-1zM272 560h1v1h-1zM274 560h1v1h-1zM276 560h1v1h-1zM278 560h1v1h-1zM280 560h1v1h-1zM282 560h1v1h-1zM284 560h1v1h-1zM286 560h1v1h-1zM288 560h1v1h-1zM290 560h1v1h-1zM292 560h1v1h-1zM294 560h1v1h-1zM296 560h1v1h-1zM298 560h1v1h-1zM300 560h1v1h-1zM302 560h1v1h-1zM304 560h1v1h-1zM306 560h1v1h-1zM308 560h1v1h-1zM310 560h1v1h-1zM312 560h1v1h-1zM314 560h1v1h-1zM316 560h1v1h-1zM318 560h1v1h-1zM320 560h1v1h-1zM322 560h1v1h-1zM324 560h1v1h-1zM326 560h1v1h-1zM328 560h1v1h-1zM330 560h1v1h-1zM332 560h1v1h-1zM334 560h1v1h-1zM336 560h1v1h-1zM338 560h1v1h-1zM340 560h1v1h-1zM342 560h1v1h-1zM344 560h1v1h-1zM346 560h1v1h-1zM348 560h1v1h-1zM350 560h1v1h-1zM352 560h1v1h-1zM354 560h1v1h-1zM356 560h1v1h-1zM358 560h1v1h-1zM360 560h1v1h-1zM362 560h1v1h-1zM364 560h1v1h-1zM366 560h1v1h-1zM368 560h1v1h-1zM370 560h1v1h-1zM372 560h1v1h-1zM374 560h1v1h-1zM376 560h1v1h-1zM378 560h1v1h-1zM380 560h1v1h-1zM382 560h1v1h-1zM384 560h1v1h-1zM386 560h1v1h-1zM388 560h1v1h-1zM390 560h1v1h-1zM392 560h1v1h-1zM394 560h1v1h-1zM396 560h1v1h-1zM398 560h1v1h-1zM400 560h1v1h-1zM402 560h1v1h-1zM404 560h1v1h-1zM406 560h1v1h-1zM408 560h1v1h-1zM410 560h1v1h-1zM412 560h1v1h-1zM414 560h1v1h-1zM416 560h1v1h-1zM418 560h1v1h-1zM420 560h1v1h-1zM422 560h1v1h-1zM424 560h1v1h-1zM426 560h1v1h-1zM428 560h1v1h-1zM430 560h1v1h-1zM432 560h1v1h-1zM434 560h1v1h-1zM436 560h1v1h-1zM438 560h1v1h-1zM440 560h1v1h-1zM442 560h1v1h-1zM444 560h1v1h-1zM446 560h1v1h-1zM448 560h1v1h-1zM450 560h1v1h-1zM452 560h1v1h-1zM454 560h1v1h-1zM456 560h1v1h-1zM458 560h1v1h-1zM460 560h1v1h-1zM462 560h1v1h-1zM464 560h1v1h-1zM466 560h1v1h-1zM468 560h1v1h-1zM470 560h1v1h-1zM472 560h1v1h-1zM474 560h1v1h-1zM476 560h1v1h-1zM478 560h1v1h-1zM480 560h1v1h-1zM482 560h1v1h-1zM484 560h1v1h-1zM486 560h1v1h-1zM488 560h1v1h-1zM490 560h1v1h-1zM492 560h1v1h-1zM494 560h1v1h-1zM496 560h1v1h-1zM498 560h1v1h-1zM500 560h1v1h-1zM502 560h1v1h-1zM504 560h1v1h-1zM506 560h1v1h-1zM508 560h1v1h-1zM510 560h1v1h-1zM512 560h1v1h-1zM514 560h1v1h-1zM516 560h1v1h-1zM518 560h1v1h-1zM520 560h1v1h-1zM522 560h1v1h-1zM524 560h1v1h-1zM526 560h1v1h-1zM528 560h1v1h-1zM530 560h1v1h-1zM532 560h1v1h-1zM534 560h1v1h-1zM536 560h1v1h-1zM538 560h1v1h-1zM540 560h1v1h-1zM542 560h1v1h-1zM544 560h1v1h-1zM546 560h1v1h-1zM548 560h1v1h-1zM550 560h1v1h-1zM552 560h1v1h-1zM554 560h1v1h-1zM556 560h1v1h-1zM558 560h1v1h-1zM560 560h1v1h-1zM562 560h1v1h-1zM564 560h1v1h-1zM566 560h1v1h-1zM568 560h1v1h-1zM570 560h1v1h-1zM572 560h1v1h-1zM574 560h1v1h-1zM576 560h1v1h-1zM578 560h1v1h-1zM580 560h1v1h-1zM582 560h1v1h-1zM584 560h1v1h-1zM586 560h1v1h-1zM588 560h1v1h-1zM590 560h1v1h-1zM592 560h1v1h-1zM594 560h1v1h-1zM596 560h1v1h-1zM598 560h1v1h-1zM600 560h1v1h-1zM602 560h1v1h-1zM604 560h1v1h-1zM606 560h1v1h-1zM608 560h1v1h-1zM610 560h1v1h-1zM612 560h1v1h-1zM614 560h1v1h-1zM616 560h1v1h-1zM618 560h1v1h-1zM620 560h1v1h-1zM622 560h1v1h-1zM624 560h1v1h-1zM626 560h1v1h-1zM628 560h1v1h-1zM630 560h1v1h-1zM632 560h1v1h-1zM634 560h1v1h-1zM636 560h1v1h-1zM638 560h1v1h-1zM640 560h1v1h-1zM642 560h1v1h-1zM644 560h1v1h-1zM646 560h1v1h-1zM648 560h1v1h-1zM650 560h1v1h-1zM652 560h1v1h-1zM654 560h1v1h-1zM656 560h1v1h-1zM658 560h1v1h-1zM660 560h1v1h-1zM662 560h1v1h-1zM664 560h1v1h-1zM666 560h1v1h-1zM668 560h1v1h-1zM670 560h1v1h-1zM672 560h1v1h-1zM674 560h1v1h-1zM676 560h1v1h-1zM678 560h1v1h-1zM680 560h1v1h-1zM682 560h1v1h-1zM684 560h1v1h-1zM686 560h1v1h-1zM688 560h1v1h-1zM690 560h1v1h-1zM692 560h1v1h-1zM694 560h1v1h-1zM696 560h1v1h-1zM698 560h1v1h-1zM700 560h1v1h-1zM702 560h1v1h-1zM704 560h1v1h-1zM706 560h1v1h-1zM708 560h1v1h-1zM710 560h1v1h-1zM712 560h1v1h-1zM714 560h1v1h-1zM716 560h1v1h-1zM718 560h1v1h-1zM720 560h1v1h-1zM722 560h1v1h-1zM724 560h1v1h-1zM726 560h1v1h-1zM728 560h1v1h-1zM730 560h1v1h-1zM732 560h1v1h-1zM734 560h1v1h-1zM736 560h1v1h-1zM738 560h1v1h-1zM740 560h1v1h-1zM742 560h1v1h-1zM744 560h1v1h-1zM746 560h1v1h-1zM748 560h1v1h-1zM750 560h1v1h-1zM752 560h1v1h-1zM754 560h1v1h-1zM756 560h1v1h-1zM758 560h1v1h-1zM760 560h1v1h-1zM762 560h1v1h-1zM764 560h1v1h-1zM766 560h1v1h-1zM768 560h1v1h-1zM770 560h1v1h-1zM772 560h1v1h-1zM774 560h1v1h-1zM776 560h1v1h-1zM1298 561h1v1h-1zM1298 563h1v1h-1zM1298 565h1v1h-1zM1299 567h1v1h-1zM1299 569h1v1h-1zM1299 571h1v1h-1zM1300 573h1v1h-1zM1300 575h1v1h-1zM1300 577h1v1h-1zM1301 579h1v1h-1zM1301 581h1v1h-1zM1301 583h1v1h-1zM1302 585h1v1h-1zM1302 587h1v1h-1zM1302 589h1v1h-1zM1303 591h1v1h-1zM1303 593h1v1h-1zM1303 595h1v1h-1zM1304 597h1v1h-1zM1304 599h1v1h-1zM1304 601h1v1h-1z" fill="#00ff00"/>
<path d="M77 566h1v1h-1zM78 566h1v1h-1zM79 566h1v1h-1zM83 566h1v1h-1zM84 566h1v1h-1zM85 566h1v1h-1zM89 566h1v1h-1zM90 566h1v1h-1zM91 566h1v1h-1zM95 566h1v1h-1zM96 566h1v1h-1zM97 566h1v1h-1zM101 566h1v1h-1zM102 566h1v1h-1zM103 566h1v1h-1zM107 566h1v1h-1zM108 566h1v1h-1zM109 566h1v1h-1zM113 566h1v1h-1zM114 566h1v1h-1zM115 566h1v1h-1zM119 566h1v1h-1zM120 566h1v1h-1zM121 566h1v1h-1zM125 566h1v1h-1zM126 566h1v1h-1zM127 566h1v1h-1zM131 566h1v1h-1zM132 566h1v1h-1zM133 566h1v1h-1zM137 566h1v1h-1zM138 566h1v1h-1zM139 566h1v1h-1zM143 566h1v1h-1zM144 566h1v1h-1zM145 566h1v1h-1zM149 566h1v1h-1zM150 566h1v1h-1zM151 566h1v1h-1zM155 566h1v1h-1zM156 566h1v1h-1zM157 566h1v1h-1zM161 566h1v1h-1zM162 566h1v1h-1zM163 566h1v1h-1zM167 566h1v1h-1zM168 566h1v1h-1zM169 566h1v1h-1zM173 566h1v1h-1zM174 566h1v1h-1zM175 566h1v1h-1zM179 566h1v1h-1zM180 566h1v1h-1zM181 566h1v1h-1zM185 566h1v1h-1zM186 566h1v1h-1zM187 566h1v1h-1zM191 566h1v1h-1zM192 566h1v1h-1zM193 566h1v1h-1zM197 566h1v1h-1zM198 566h1v1h-1zM199 566h1v1h-1zM203 566h1v1h-1zM204 566h1v1h-1zM205 566h1v1h-1zM209 566h1v1h-1zM210 566h1v1h-1zM211 566h1v1h-1zM215 566h1v1h-1zM216 566h1v1h-1zM217 566h1v1h-1zM221 566h1v1h-1zM222 566h1v1h-1zM223 566h1v1h-1zM227 566h1v1h-1zM228 566h1v1h-1zM229 566h1v1h-1zM233 566h1v1h-1zM234 566h1v1h-1zM235 566h1v1h-1zM239 566h1v1h-1zM240 566h1v1h-1zM241 566h1v1h-1zM245 566h1v1h-1zM246 566h1v1h-1zM247 566h1v1h-1zM251 566h1v1h-1zM252 566h1v1h-1zM253 566h1v1h-1zM257 566h1v1h-1zM258 566h1v1h-1zM259 566h1v1h-1zM263 566h1v1h-1zM264 566h1v1h-1zM265 566h1v1h-1zM269 566h1v1h-1zM270 566h1v1h-1zM271 566h1v1h-1zM275 566h1v1h-1zM276 566h1v1h-1zM277 566h1v1h-1zM281 566h1v1h-1zM282 566h1v1h-1zM283 566h1v1h-1zM287 566h1v1h-1zM288 566h1v1h-1zM289 566h1v1h-1zM293 566h1v1h-1zM294 566h1v1h-1zM295 566h1v1h-1zM299 566h1v1h-1zM300 566h1v1h-1zM301 566h1v1h-1zM305 566h1v1h-1zM306 566h1v1h-1zM307 566h1v1h-1zM311 566h1v1h-1zM312 566h1v1h-1zM313 566h1v1h-1zM317 566h1v1h-1zM318 566h1v1h-1zM319 566h1v1h-1zM323 566h1v1h-1zM324 566h1v1h-1zM325 566h1v1h-1zM329 566h1v1h-1zM330 566h1v1h-1zM331 566h1v1h-1zM335 566h1v1h-1zM336 566h1v1h-1zM337 566h1v1h-1zM341 566h1v1h-1zM342 566h1v1h-1zM343 566h1v1h-1zM347 566h1v1h-1zM348 566h1v1h-1zM349 566h1v1h-1zM353 566h1v1h-1zM354 566h1v1h-1zM355 566h1v1h-1zM359 566h1v1h-1zM360 566h1v1h-1zM361 566h1v1h-1zM365 566h1v1h-1zM366 566h1v1h-1zM367 566h1v1h-1zM371 566h1v1h-1zM372 566h1v1h-1zM373 566h1v1h-1zM377 566h1v1h-1zM378 566h1v1h-1zM379 566h1v1h-1zM383 566h1v1h-1zM384 566h1v1h-1zM385 566h1v1h-1zM389 566h1v1h-1zM390 566h1v1h-1zM391 566h1v1h-1zM395 566h1v1h-1zM396 566h1v1h-1zM397 566h1v1h-1zM401 566h1v1h-1zM402 566h1v1h-1zM403 566h1v1h-1zM407 566h1v1h-1zM408 566h1v1h-1zM409 566h1v1h-1zM413 566h1v1h-1zM414 566h1v1h-1zM415 566h1v1h-1zM419 566h1v1h-1zM420 566h1v1h-1zM421 566h1v1h-1zM425 566h1v1h-1zM426 566h1v1h-1zM427 566h1v1h-1zM431 566h1v1h-1zM432 566h1v1h-1zM433 566h1v1h-1zM437 566h1v1h-1zM438 566h1v1h-1zM439 566h1v1h-1zM443 566h1v1h-1zM444 566h1v1h-1zM445 566h1v1h-1zM449 566h1v1h-1zM450 566h1v1h-1zM451 566h1v1h-1zM455 566h1v1h-1zM456 566h1v1h-1zM457 566h1v1h-1zM461 566h1v1h-1zM462 566h1v1h-1zM463 566h1v1h-1zM467 566h1v1h-1zM468 566h1v1h-1zM469 566h1v1h-1zM473 566h1v1h-1zM474 566h1v1h-1zM475 566h1v1h-1zM479 566h1v1h-1zM480 566h1v1h-1zM481 566h1v1h-1zM485 566h1v1h-1zM486 566h1v1h-1zM487 566h1v1h-1zM491 566h1v1h-1zM492 566h1v1h-1zM493 566h1v1h-1zM497 566h1v1h-1zM498 566h1v1h-1zM499 566h1v1h-1zM503 566h1v1h-1zM504 566h1v1h-1zM505 566h1v1h-1zM509 566h1v1h-1zM510 566h1v1h-1zM511 566h1v1h-1zM515 566h1v1h-1zM516 566h1v1h-1zM517 566h1v1h-1zM521 566h1v1h-1zM522 566h1v1h-1zM523 566h1v1h-1zM527 566h1v1h-1zM528 566h1v1h-1zM529 566h1v1h-1zM533 566h1v1h-1zM534 566h1v1h-1zM535 566h1v1h-1zM539 566h1v1h-1zM540 566h1v1h-1zM541 566h1v1h-1zM545 566h1v1h-1zM546 566h1v1h-1zM547 566h1v1h-1zM551 566h1v1h-1zM552 566h1v1h-1zM553 566h1v1h-1zM557 566h1v1h-1zM558 566h1v1h-1zM559 566h1v1h-1zM563 566h1v1h-1zM564 566h1v1h-1zM565 566h1v1h-1zM569 566h1v1h-1zM570 566h1v1h-1zM571 566h1v1h-1zM575 566h1v1h-1zM576 566h1v1h-1zM577 566h1v1h-1zM581 566h1v1h-1zM582 566h1v1h-1zM583 566h1v1h-1zM587 566h1v1h-1zM588 566h1v1h-1zM589 566h1v1h-1zM593 566h1v1h-1zM594 566h1v1h-1zM595 566h1v1h-1zM599 566h1v1h-1zM600 566h1v1h-1zM601 566h1v1h-1zM605 566h1v1h-1zM606 566h1v1h-1zM607 566h1v1h-1zM611 566h1v1h-1zM612 566h1v1h-1zM613 566h1v1h-1zM617 566h1v1h-1zM618 566h1v1h-1zM619 566h1v1h-1zM623 566h1v1h-1zM624 566h1v1h-1zM625 566h1v1h-1zM629 566h1v1h-1zM630 566h1v1h-1zM631 566h1v1h-1zM635 566h1v1h-1zM636 566h1v1h-1zM637 566h1v1h-1zM641 566h1v1h-1zM642 566h1v1h-1zM643 566h1v1h-1zM647 566h1v1h-1zM648 566h1v1h-1zM649 566h1v1h-1zM653 566h1v1h-1zM654 566h1v1h-1zM655 566h1v1h-1zM659 566h1v1h-1zM660 566h1v1h-1zM661 566h1v1h-1zM665 566h1v1h-1zM666 566h1v1h-1zM667 566h1v1h-1zM671 566h1v1h-1zM672 566h1v1h-1zM673 566h1v1h-1zM677 566h1v1h-1zM678 566h1v1h-1zM679 566h1v1h-1zM683 566h1v1h-1zM684 566h1v1h-1zM685 566h1v1h-1zM689 566h1v1h-1zM690 566h1v1h-1zM691 566h1v1h-1zM695 566h1v1h-1zM696 566h1v1h-1zM697 566h1v1h-1zM701 566h1v1h-1zM702 566h1v1h-1zM703 566h1v1h-1zM707 566h1v1h-1zM708 566h1v1h-1zM709 566h1v1h-1zM713 566h1v1h-1zM714 566h1v1h-1zM715 566h1v1h-1zM719 566h1v1h-1zM720 566h1v1h-1zM721 566h1v1h-1zM725 566h1v1h-1zM726 566h1v1h-1zM727 566h1v1h-1zM731 566h1v1h-1zM732 566h1v1h-1zM733 566h1v1h-1zM737 566h1v1h-1zM738 566h1v1h-1zM739 566h1v1h-1zM743 566h1v1h-1zM744 566h1v1h-1zM745 566h1v1h-1zM749 566h1v1h-1zM750 566h1v1h-1zM751 566h1v1h-1zM755 566h1v1h-1zM756 566h1v1h-1zM757 566h1v1h-1zM761 566h1v1h-1zM762 566h1v1h-1zM763 566h1v1h-1zM767 566h1v1h-1zM768 566h1v1h-1zM769 566h1v1h-1zM773 566h1v1h-1zM774 566h1v1h-1zM775 566h1v1h-1zM779 566h1v1h-1zM780 566h1v1h-1zM781 566h1v1h-1zM785 566h1v1h-1zM786 566h1v1h-1zM787 566h1v1h-1zM791 566h1v1h-1zM792 566h1v1h-1zM793 566h1v1h-1zM797 566h1v1h-1zM798 566h1v1h-1zM799 566h1v1h-1zM803 566h1v1h-1zM804 566h1v1h-1zM805 566h1v1h-1zM809 566h1v1h-1zM810 566h1v1h-1zM811 566h1v1h-1zM815 566h1v1h-1zM816 566h1v1h-1zM817 566h1v1h-1zM821 566h1v1h-1zM822 566h1v1h-1zM823 566h1v1h-1zM827 566h1v1h-1zM828 566h1v1h-1zM829 566h1v1h-1zM833 566h1v1h-1zM834 566h1v1h-1zM835 566h1v1h-1zM839 566h1v1h-1zM840 566h1v1h-1zM841 566h1v1h-1zM845 566h1v1h-1zM846 566h1v1h-1zM847 566h1v1h-1zM851 566h1v1h-1zM852 566h1v1h-1zM853 566h1v1h-1zM857 566h1v1h-1zM858 566h1v1h-1zM859 566h1v1h-1zM863 566h1v1h-1zM864 566h1v1h-1zM865 566h1v1h-1zM869 566h1v1h-1zM870 566h1v1h-1zM871 566h1v1h-1zM875 566h1v1h-1zM876 566h1v1h-1zM877 566h1v1h-1zM881 566h1v1h-1zM882 566h1v1h-1zM883 566h1v1h-1zM887 566h1v1h-1zM888 566h1v1h-1zM889 566h1v1h-1zM893 566h1v1h-1zM894 566h1v1h-1zM895 566h1v1h-1zM899 566h1v1h-1zM900 566h1v1h-1zM901 566h1v1h-1zM905 566h1v1h-1zM906 566h1v1h-1zM907 566h1v1h-1zM911 566h1v1h-1zM912 566h1v1h-1zM913 566h1v1h-1zM917 566h1v1h-1zM918 566h1v1h-1zM919 566h1v1h-1zM923 566h1v1h-1zM924 566h1v1h-1zM925 566h1v1h-1zM929 566h1v1h-1zM930 566h1v1h-1zM931 566h1v1h-1zM935 566h1v1h-1zM936 566h1v1h-1zM937 566h1v1h-1zM941 566h1v1h-1zM942 566h1v1h-1zM943 566h1v1h-1zM947 566h1v1h-1zM948 566h1v1h-1zM949 566h1v1h-1zM953 566h1v1h-1zM954 566h1v1h-1zM955 566h1v1h-1zM959 566h1v1h-1zM960 566h1v1h-1zM961 566h1v1h-1zM965 566h1v1h-1zM966 566h1v1h-1zM967 566h1v1h-1zM971 566h1v1h-1zM972 566h1v1h-1zM973 566h1v1h-1zM977 566h1v1h-1zM978 566h1v1h-1zM979 566h1v1h-1zM983 566h1v1h-1zM984 566h1v1h-1zM985 566h1v1h-1zM989 566h1v1h-1zM990 566h1v1h-1zM991 566h1v1h-1zM995 566h1v1h-1zM996 566h1v1h-1zM997 566h1v1h-1zM1001 566h1v1h-1zM1002 566h1v1h-1zM1003 566h1v1h-1zM1007 566h1v1h-1zM1008 566h1v1h-1zM1009 566h1v1h-1zM1013 566h1v1h-1zM1014 566h1v1h-1zM1015 566h1v1h-1zM1019 566h1v1h-1zM1020 566h1v1h-1zM1021 566h1v1h-1zM1025 566h1v1h-1zM1026 566h1v1h-1zM1027 566h1v1h-1zM1031 566h1v1h-1zM1032 566h1v1h-1zM1033 566h1v1h-1zM1037 566h1v1h-1zM1038 566h1v1h-1zM1039 566h1v1h-1zM1043 566h1v1h-1zM1044 566h1v1h-1zM1045 566h1v1h-1zM1049 566h1v1h-1zM1050 566h1v1h-1zM1051 566h1v1h-1zM1055 566h1v1h-1zM1056 566h1v1h-1zM1057 566h1v1h-1zM1061 566h1v1h-1zM1062 566h1v1h-1zM1063 566h1v1h-1zM1067 566h1v1h-1zM1068 566h1v1h-1zM1069 566h1v1h-1zM1073 566h1v1h-1zM1074 566h1v1h-1zM1075 566h1v1h-1zM1079 566h1v1h-1zM1080 566h1v1h-1zM1081 566h1v1h-1zM1085 566h1v1h-1zM1086 566h1v1h-1zM1087 566h1v1h-1zM1091 566h1v1h-1zM1093 566h1v1h-1zM1097 566h1v1h-1zM1098 566h1v1h-1zM1099 566h1v1h-1zM1103 566h1v1h-1zM1104 566h1v1h-1zM1105 566h1v1h-1zM1109 566h1v1h-1zM1110 566h1v1h-1zM1111 566h1v1h-1zM1115 566h1v1h-1zM1116 566h1v1h-1zM1117 566h1v1h-1zM1121 566h1v1h-1zM1122 566h1v1h-1zM1123 566h1v1h-1zM1127 566h1v1h-1zM1128 566h1v1h-1zM1129 566h1v1h-1zM1133 566h1v1h-1zM1134 566h1v1h-1zM1135 566h1v1h-1zM1139 566h1v1h-1zM1140 566h1v1h-1zM1141 566h1v1h-1zM1145 566h1v1h-1zM1146 566h1v1h-1zM1147 566h1v1h-1zM1151 566h1v1h-1zM1152 566h1v1h-1zM1153 566h1v1h-1zM1157 566h1v1h-1zM1158 566h1v1h-1zM1159 566h1v1h-1zM1163 566h1v1h-1zM1164 566h1v1h-1zM1165 566h1v1h-1zM1169 566h1v1h-1zM1170 566h1v1h-1zM1171 566h1v1h-1zM1175 566h1v1h-1zM1176 566h1v1h-1zM1177 566h1v1h-1zM1181 566h1v1h-1zM1182 566h1v1h-1zM1183 566h1v1h-1zM1187 566h1v1h-1zM1188 566h1v1h-1zM1189 566h1v1h-1zM1193 566h1v1h-1zM1194 566h1v1h-1zM1195 566h1v1h-1zM1199 566h1v1h-1zM1200 566h1v1h-1zM1201 566h1v1h-1zM1205 566h1v1h-1zM1206 566h1v1h-1zM1207 566h1v1h-1zM1211 566h1v1h-1zM1212 566h1v1h-1zM1213 566h1v1h-1zM1217 566h1v1h-1zM1218 566h1v1h-1zM1219 566h1v1h-1zM1223 566h1v1h-1zM1224 566h1v1h-1zM1225 566h1v1h-1zM1229 566h1v1h-1zM1230 566h1v1h-1zM1231 566h1v1h-1zM1235 566h1v1h-1zM1236 566h1v1h-1zM1237 566h1v1h-1zM1241 566h1v1h-1zM1242 566h1v1h-1zM1243 566h1v1h-1zM1247 566h1v1h-1zM1248 566h1v1h-1zM1249 566h1v1h-1zM1253 566h1v1h-1zM1254 566h1v1h-1zM1255 566h1v1h-1zM1259 566h1v1h-1zM1260 566h1v1h-1zM1261 566h1v1h-1zM1265 566h1v1h-1zM1266 566h1v1h-1zM1267 566h1v1h-1zM1271 566h1v1h-1zM1272 566h1v1h-1zM1273 566h1v1h-1zM1277 566h1v1h-1zM1278 566h1v1h-1zM1279 566h1v1h-1zM1283 566h1v1h-1zM1284 566h1v1h-1zM1285 566h1v1h-1zM1289 566h1v1h-1zM1290 566h1v1h-1zM1291 566h1v1h-1zM1295 566h1v1h-1zM1296 566h1v1h-1zM1297 566h1v1h-1zM1301 566h1v1h-1zM1302 566h1v1h-1zM1303 566h1v1h-1zM953 610h1v1h-1zM954 610h1v1h-1zM955 610h1v1h-1zM959 610h1v1h-1zM960 610h1v1h-1zM961 610h1v1h-1zM965 610h1v1h-1zM966 610h1v1h-1zM967 610h1v1h-1zM971 610h1v1h-1zM972 610h1v1h-1zM973 610h1v1h-1zM977 610h1v1h-1zM978 610h1v1h-1zM979 610h1v1h-1zM983 610h1v1h-1zM984 610h1v1h-1zM985 610h1v1h-1zM989 610h1v1h-1zM990 610h1v1h-1zM991 610h1v1h-1zM995 610h1v1h-1zM996 610h1v1h-1zM997 610h1v1h-1zM1001 610h1v1h-1zM1002 610h1v1h-1zM1003 610h1v1h-1zM1007 610h1v1h-1zM1008 610h1v1h-1zM1009 610h1v1h-1zM1013 610h1v1h-1zM1014 610h1v1h-1zM1015 610h1v1h-1zM1019 610h1v1h-1zM1020 610h1v1h-1zM1021 610h1v1h-1zM1025 610h1v1h-1zM1026 610h1v1h-1zM1027 610h1v1h-1zM1031 610h1v1h-1zM1032 610h1v1h-1zM1033 610h1v1h-1zM1037 610h1v1h-1zM1038 610h1v1h-1zM1039 610h1v1h-1zM1043 610h1v1h-1zM1044 610h1v1h-1zM1045 610h1v1h-1zM1049 610h1v1h-1zM1050 610h1v1h-1zM1051 610h1v1h-1zM1055 610h1v1h-1zM1056 610h1v1h-1zM1057 610h1v1h-1zM1061 610h1v1h-1zM1062 610h1v1h-1zM1063 610h1v1h-1zM1067 610h1v1h-1zM1068 610h1v1h-1zM1069 610h1v1h-1zM1073 610h1v1h-1zM1074 610h1v1h-1zM1075 610h1v1h-1zM1079 610h1v1h-1zM1080 610h1v1h-1zM1081 610h1v1h-1zM1085 610h1v1h-1zM1086 610h1v1h-1zM1087 610h1v1h-1zM1091 610h1v1h-1zM1092 610h1v1h-1zM1093 610h1v1h-1zM1097 610h1v1h-1zM1098 610h1v1h-1zM1099 610h1v1h-1zM1103 610h1v1h-1zM1104 610h1v1h-1zM1105 610h1v1h-1zM1109 610h1v1h-1zM1110 610h1v1h-1zM1111 610h1v1h-1zM1115 610h1v1h-1zM1116 610h1v1h-1zM1117 610h1v1h-1zM1121 610h1v1h-1zM1122 610h1v1h-1zM1123 610h1v1h-1zM1127 610h1v1h-1zM1128 610h1v1h-1zM1129 610h1v1h-1zM1133 610h1v1h-1zM1134 610h1v1h-1zM1135 610h1v1h-1zM1139 610h1v1h-1zM1140 610h1v1h-1zM1141 610h1v1h-1zM1145 610h1v1h-1zM1146 610h1v1h-1zM1147 610h1v1h-1zM1151 610h1v1h-1zM1152 610h1v1h-1zM1153 610h1v1h-1zM1157 610h1v1h-1zM1158 610h1v1h-1zM1159 610h1v1h-1zM1163 610h1v1h-1zM1164 610h1v1h-1zM1165 610h1v1h-1zM1169 610h1v1h-1zM1170 610h1v1h-1zM1171 610h1v1h-1zM1175 610h1v1h-1zM1176 610h1v1h-1zM1177 610h1v1h-1zM1181 610h1v1h-1zM1182 610h1v1h-1zM1183 610h1v1h-1zM1187 610h1v1h-1zM1188 610h1v1h-1zM1189 610h1v1h-1zM1193 610h1v1h-1zM1194 610h1v1h-1zM1195 610h1v1h-1zM1199 610h1v1h-1zM1200 610h1v1h-1zM1201 610h1v1h-1zM1205 610h1v1h-1zM1206 610h1v1h-1zM1207 610h1v1h-1zM1211 610h1v1h-1zM1212 610h1v1h-1zM1213 610h1v1h-1zM1217 610h1v1h-1zM1218 610h1v1h-1zM1219 610h1v1h-1zM1223 610h1v1h-1zM1224 610h1v1h-1zM1225 610h1v1h-1zM1229 610h1v1h-1zM1230 610h1v1h-1zM1231 610h1v1h-1zM1235 610h1v1h-1zM1236 610h1v1h-1zM1237 610h1v1h-1zM1241 610h1v1h-1zM1242 610h1v1h-1zM1243 610h1v1h-1zM1247 610h1v1h-1zM1248 610h1v1h-1zM1249 610h1v1h-1zM1253 610h1v1h-1zM1254 610h1v1h-1zM1255 610h1v1h-1zM1259 610h1v1h-1zM1260 610h1v1h-1zM1261 610h1v1h-1zM1265 610h1v1h-1zM1266 610h1v1h-1zM1267 610h1v1h-1zM1271 610h1v1h-1zM1272 610h1v1h-1zM1273 610h1v1h-1zM1277 610h1v1h-1zM1278 610h1v1h-1zM1279 610h1v1h-1zM1283 610h1v1h-1zM1284 610h1v1h-1zM1285 610h1v1h-1zM1289 610h1v1h-1zM1290 610h1v1h-1zM1291 610h1v1h-1zM1295 610h1v1h-1zM1296 610h1v1h-1zM1297 610h1v1h-1zM1301 610h1v1h-1zM1302 610h1v1h-1zM1303 610h1v1h-1zM768 38h1v1h-1zM768 39h1v1h-1zM768 40h1v1h-1zM768 44h1v1h-1zM768 45h1v1h-1zM768 46h1v1h-1zM768 50h1v1h-1zM768 51h1v1h-1zM768 52h1v1h-1zM768 56h1v1h-1zM768 57h1v1h-1zM768 58h1v1h-1zM768 62h1v1h-1zM768 63h1v1h-1zM768 64h1v1h-1zM768 68h1v1h-1zM768 69h1v1h-1zM768 70h1v1h-1zM768 74h1v1h-1zM768 75h1v1h-1zM768 76h1v1h-1zM768 80h1v1h-1zM768 81h1v1h-1zM768 82h1v1h-1zM768 86h1v1h-1zM768 87h1v1h-1zM768 88h1v1h-1zM768 92h1v1h-1zM768 93h1v1h-1zM768 94h1v1h-1zM768 98h1v1h-1zM768 99h1v1h-1zM768 100h1v1h-1zM768 104h1v1h-1zM768 105h1v1h-1zM768 106h1v1h-1zM768 110h1v1h-1zM768 111h1v1h-1zM768 112h1v1h-1zM768 116h1v1h-1zM768 117h1v1h-1zM768 118h1v1h-1zM768 122h1v1h-1zM768 123h1v1h-1zM768 124h1v1h-1zM768 128h1v1h-1zM768 129h1v1h-1zM768 130h1v1h-1zM768 134h1v1h-1zM768 135h1v1h-1zM768 136h1v1h-1zM768 140h1v1h-1zM768 141h1v1h-1zM768 142h1v1h-1zM768 146h1v1h-1zM768 147h1v1h-1zM768 148h1v1h-1zM768 152h1v1h-1zM768 153h1v1h-1zM768 154h1v1h-1zM768 158h1v1h-1zM768 159h1v1h-1zM768 160h1v1h-1zM768 164h1v1h-1zM768 165h1v1h-1zM768 166h1v1h-1zM768 170h1v1h-1zM768 171h1v1h-1zM768 172h1v1h-1zM768 176h1v1h-1zM768 177h1v1h-1zM768 178h1v1h-1zM768 182h1v1h-1zM768 183h1v1h-1zM768 184h1v1h-1zM768 188h1v1h-1zM768 189h1v1h-1zM768 190h1v1h-1zM768 194h1v1h-1zM768 195h1v1h-1zM768 196h1v1h-1zM768 200h1v1h-1zM768 201h1v1h-1zM768 202h1v1h-1zM768 206h1v1h-1zM768 207h1v1h-1zM768 208h1v1h-1zM768 212h1v1h-1zM768 213h1v1h-1zM768 214h1v1h-1zM768 218h1v1h-1zM768 219h1v1h-1zM768 220h1v1h-1zM768 224h1v1h-1zM768 225h1v1h-1zM768 226h1v1h-1zM768 230h1v1h-1zM768 231h1v1h-1zM768 232h1v1h-1zM768 236h1v1h-1zM768 237h1v1h-1zM768 238h1v1h-1zM768 242h1v1h-1zM768 243h1v1h-1zM768 244h1v1h-1zM768 248h1v1h-1zM768 249h1v1h-1zM768 250h1v1h-1zM768 254h1v1h-1zM768 255h1v1h-1zM768 256h1v1h-1zM768 260h1v1h-1zM768 261h1v1h-1zM768 262h1v1h-1zM768 266h1v1h-1zM768 267h1v1h-1zM768 268h1v1h-1zM768 272h1v1h-1zM768 273h1v1h-1zM768 274h1v1h-1zM768 278h1v1h-1zM768 279h1v1h-1zM768 280h1v1h-1zM768 284h1v1h-1zM768 285h1v1h-1zM768 286h1v1h-1zM768 290h1v1h-1zM768 291h1v1h-1zM768 292h1v1h-1zM768 296h1v1h-1zM768 297h1v1h-1zM768 298h1v1h-1zM768 302h1v1h-1zM768 303h1v1h-1zM768 304h1v1h-1zM768 308h1v1h-1zM768 309h1v1h-1zM768 310h1v1h-1zM768 314h1v1h-1zM768 315h1v1h-1zM768 316h1v1h-1zM768 320h1v1h-1zM768 321h1v1h-1zM768 322h1v1h-1zM768 326h1v1h-1zM768 327h1v1h-1zM768 328h1v1h-1zM768 332h1v1h-1zM768 333h1v1h-1zM768 334h1v1h-1zM768 338h1v1h-1zM768 339h1v1h-1zM768 340h1v1h-1zM768 344h1v1h-1zM768 345h1v1h-1zM768 346h1v1h-1zM768 350h1v1h-1zM768 351h1v1h-1zM768 352h1v1h-1zM768 356h1v1h-1zM768 357h1v1h-1zM768 358h1v1h-1zM768 362h1v1h-1zM768 363h1v1h-1zM768 364h1v1h-1zM768 368h1v1h-1zM768 369h1v1h-1zM768 370h1v1h-1zM768 374h1v1h-1zM768 375h1v1h-1zM768 376h1v1h-1zM768 380h1v1h-1zM768 381h1v1h-1zM768 382h1v1h-1zM768 386h1v1h-1zM768 387h1v1h-1zM768 388h1v1h-1zM768 392h1v1h-1zM768 393h1v1h-1zM768 394h1v1h-1zM768 398h1v1h-1zM768 399h1v1h-1zM768 400h1v1h-1zM768 404h1v1h-1zM768 405h1v1h-1zM768 406h1v1h-1zM768 410h1v1h-1zM768 411h1v1h-1zM768 412h1v1h-1zM768 416h1v1h-1zM768 417h1v1h-1zM768 418h1v1h-1zM768 422h1v1h-1zM768 423h1v1h-1zM768 424h1v1h-1zM768 428h1v1h-1zM768 429h1v1h-1zM768 430h1v1h-1zM768 434h1v1h-1zM768 435h1v1h-1zM768 436h1v1h-1zM768 440h1v1h-1zM768 441h1v1h-1zM768 442h1v1h-1zM768 446h1v1h-1zM768 447h1v1h-1zM768 448h1v1h-1zM768 452h1v1h-1zM768 453h1v1h-1zM768 454h1v1h-1zM768 458h1v1h-1zM768 459h1v1h-1zM768 460h1v1h-1zM768 464h1v1h-1zM768 465h1v1h-1zM768 466h1v1h-1zM768 470h1v1h-1zM768 471h1v1h-1zM768 472h1v1h-1zM768 476h1v1h-1zM768 477h1v1h-1zM768 478h1v1h-1zM768 482h1v1h-1zM768 483h1v1h-1zM768 484h1v1h-1zM768 488h1v1h-1zM768 489h1v1h-1zM768 490h1v1h-1zM768 494h1v1h-1zM768 495h1v1h-1zM768 496h1v1h-1zM768 500h1v1h-1zM768 501h1v1h-1zM768 502h1v1h-1zM768 506h1v1h-1zM768 507h1v1h-1zM768 508h1v1h-1zM768 512h1v1h-1zM768 513h1v1h-1zM768 514h1v1h-1zM768 518h1v1h-1zM768 519h1v1h-1zM768 520h1v1h-1zM768 524h1v1h-1zM768 525h1v1h-1zM768 526h1v1h-1zM768 530h1v1h-1zM768 531h1v1h-1zM768 532h1v1h-1zM768 536h1v1h-1zM768 537h1v1h-1zM768 538h1v1h-1zM768 542h1v1h-1zM768 543h1v1h-1zM768 544h1v1h-1zM768 548h1v1h-1zM768 549h1v1h-1zM768 550h1v1h-1zM768 554h1v1h-1zM768 555h1v1h-1zM768 556h1v1h-1zM768 561h1v1h-1zM768 562h1v1h-1zM768 566h1v1h-1zM768 567h1v1h-1zM768 568h1v1h-1zM768 572h1v1h-1zM768 573h1v1h-1zM768 574h1v1h-1zM768 578h1v1h-1zM768 579h1v1h-1zM768 580h1v1h-1zM768 584h1v1h-1zM768 585h1v1h-1zM768 586h1v1h-1zM768 590h1v1h-1zM768 591h1v1h-1zM768 592h1v1h-1zM768 596h1v1h-1zM768 597h1v1h-1zM768 598h1v1h-1zM768 602h1v1h-1zM768 603h1v1h-1zM768 604h1v1h-1zM768 608h1v1h-1zM768 609h1v1h-1zM1092 38h1v1h-1zM1092 39h1v1h-1zM1092 40h1v1h-1zM1092 44h1v1h-1zM1092 45h1v1h-1zM1092 46h1v1h-1zM1092 50h1v1h-1zM1092 51h1v1h-1zM1092 52h1v1h-1zM1092 56h1v1h-1zM1092 57h1v1h-1zM1092 58h1v1h-1zM1092 62h1v1h-1zM1092 63h1v1h-1zM1092 64h1v1h-1zM1092 68h1v1h-1zM1092 69h1v1h-1zM1092 70h1v1h-1zM1092 74h1v1h-1zM1092 75h1v1h-1zM1092 76h1v1h-1zM1092 80h1v1h-1zM1092 81h1v1h-1zM1092 82h1v1h-1zM1092 86h1v1h-1zM1092 87h1v1h-1zM1092 88h1v1h-1zM1092 92h1v1h-1zM1092 93h1v1h-1zM1092 94h1v1h-1zM1092 98h1v1h-1zM1092 99h1v1h-1zM1092 100h1v1h-1zM1092 104h1v1h-1zM1092 105h1v1h-1zM1092 106h1v1h-1zM1092 110h1v1h-1zM1092 111h1v1h-1zM1092 112h1v1h-1zM1092 116h1v1h-1zM1092 117h1v1h-1zM1092 118h1v1h-1zM1092 122h1v1h-1zM1092 123h1v1h-1zM1092 124h1v1h-1zM1092 128h1v1h-1zM1092 129h1v1h-1zM1092 130h1v1h-1zM1092 134h1v1h-1zM1092 135h1v1h-1zM1092 136h1v1h-1zM1092 140h1v1h-1zM1092 141h1v1h-1zM1092 142h1v1h-1zM1092 146h1v1h-1zM1092 147h1v1h-1zM1092 148h1v1h-1zM1092 152h1v1h-1zM1092 153h1v1h-1zM1092 154h1v1h-1zM1092 158h1v1h-1zM1092 159h1v1h-1zM1092 160h1v1h-1zM1092 164h1v1h-1zM1092 165h1v1h-1zM1092 166h1v1h-1zM1092 170h1v1h-1zM1092 171h1v1h-1zM1092 172h1v1h-1zM1092 176h1v1h-1zM1092 177h1v1h-1zM1092 178h1v1h-1zM1092 182h1v1h-1zM1092 183h1v1h-1zM1092 184h1v1h-1zM1092 188h1v1h-1zM1092 189h1v1h-1zM1092 190h1v1h-1zM1092 194h1v1h-1zM1092 195h1v1h-1zM1092 196h1v1h-1zM1092 200h1v1h-1zM1092 201h1v1h-1zM1092 202h1v1h-1zM1092 206h1v1h-1zM1092 207h1v1h-1zM1092 208h1v1h-1zM1092 212h1v1h-1zM1092 213h1v1h-1zM1092 214h1v1h-1zM1092 218h1v1h-1zM1092 219h1v1h-1zM1092 220h1v1h-1zM1092 224h1v1h-1zM1092 225h1v1h-1zM1092 226h1v1h-1zM1092 230h1v1h-1zM1092 231h1v1h-1zM1092 232h1v1h-1zM1092 236h1v1h-1zM1092 237h1v1h-1zM1092 238h1v1h-1zM1092 242h1v1h-1zM1092 243h1v1h-1zM1092 244h1v1h-1zM1092 248h1v1h-1zM1092 249h1v1h-1zM1092 250h1v1h-1zM1092 254h1v1h-1zM1092 255h1v1h-1zM1092 256h1v1h-1zM1092 260h1v1h-1zM1092 261h1v1h-1zM1092 262h1v1h-1zM1092 267h1v1h-1zM1092 272h1v1h-1zM1092 273h1v1h-1zM1092 274h1v1h-1zM1092 278h1v1h-1zM1092 279h1v1h-1zM1092 280h1v1h-1zM1092 284h1v1h-1zM1092 285h1v1h-1zM1092 286h1v1h-1zM1092 290h1v1h-1zM1092 291h1v1h-1zM1092 292h1v1h-1zM1092 296h1v1h-1zM1092 297h1v1h-1zM1092 298h1v1h-1zM1092 302h1v1h-1zM1092 303h1v1h-1zM1092 304h1v1h-1zM1092 308h1v1h-1zM1092 309h1v1h-1zM1092 310h1v1h-1zM1092 314h1v1h-1zM1092 315h1v1h-1zM1092 316h1v1h-1zM1092 320h1v1h-1zM1092 321h1v1h-1zM1092 322h1v1h-1zM1092 326h1v1h-1zM1092 327h1v1h-1zM1092 328h1v1h-1zM1092 332h1v1h-1zM1092 333h1v1h-1zM1092 334h1v1h-1zM1092 338h1v1h-1zM1092 339h1v1h-1zM1092 340h1v1h-1zM1092 344h1v1h-1zM1092 345h1v1h-1zM1092 346h1v1h-1zM1092 350h1v1h-1zM1092 351h1v1h-1zM1092 352h1v1h-1zM1092 356h1v1h-1zM1092 357h1v1h-1zM1092 358h1v1h-1zM1092 362h1v1h-1zM1092 363h1v1h-1zM1092 364h1v1h-1zM1092 368h1v1h-1zM1092 369h1v1h-1zM1092 370h1v1h-1zM1092 374h1v1h-1zM1092 375h1v1h-1zM1092 376h1v1h-1zM1092 380h1v1h-1zM1092 381h1v1h-1zM1092 382h1v1h-1zM1092 386h1v1h-1zM1092 387h1v1h-1zM1092 388h1v1h-1zM1092 392h1v1h-1zM1092 393h1v1h-1zM1092 394h1v1h-1zM1092 398h1v1h-1zM1092 399h1v1h-1zM1092 400h1v1h-1zM1092 404h1v1h-1zM1092 405h1v1h-1zM1092 406h1v1h-1zM1092 410h1v1h-1zM1092 411h1v1h-1zM1092 412h1v1h-1zM1092 416h1v1h-1zM1092 417h1v1h-1zM1092 418h1v1h-1zM1092 422h1v1h-1zM1092 423h1v1h-1zM1092 424h1v1h-1zM1092 428h1v1h-1zM1092 429h1v1h-1zM1092 430h1v1h-1zM1092 434h1v1h-1zM1092 435h1v1h-1zM1092 436h1v1h-1zM1092 440h1v1h-1zM1092 441h1v1h-1zM1092 442h1v1h-1zM1092 446h1v1h-1zM1092 447h1v1h-1zM1092 448h1v1h-1zM1092 452h1v1h-1zM1092 453h1v1h-1zM1092 454h1v1h-1zM1092 458h1v1h-1zM1092 459h1v1h-1zM1092 460h1v1h-1zM1092 464h1v1h-1zM1092 465h1v1h-1zM1092 466h1v1h-1zM1092 470h1v1h-1zM1092 471h1v1h-1zM1092 472h1v1h-1zM1092 476h1v1h-1zM1092 477h1v1h-1zM1092 478h1v1h-1zM1092 482h1v1h-1zM1092 483h1v1h-1zM1092 484h1v1h-1zM1092 488h1v1h-1zM1092 489h1v1h-1zM1092 490h1v1h-1zM1092 494h1v1h-1zM1092 495h1v1h-1zM1092 496h1v1h-1zM1092 500h1v1h-1zM1092 501h1v1h-1zM1092 502h1v1h-1zM1092 506h1v1h-1zM1092 507h1v1h-1zM1092 508h1v1h-1zM1092 512h1v1h-1zM1092 513h1v1h-1zM1092 514h1v1h-1zM1092 518h1v1h-1zM1092 519h1v1h-1zM1092 520h1v1h-1zM1092 524h1v1h-1zM1092 525h1v1h-1zM1092 526h1v1h-1zM1092 530h1v1h-1zM1092 531h1v1h-1zM1092 532h1v1h-1zM1092 536h1v1h-1zM1092 537h1v1h-1zM1092 538h1v1h-1zM1092 542h1v1h-1zM1092 543h1v1h-1zM1092 544h1v1h-1zM1092 548h1v1h-1zM1092 549h1v1h-1zM1092 550h1v1h-1zM1092 554h1v1h-1zM1092 555h1v1h-1zM1092 556h1v1h-1zM1092 560h1v1h-1zM1092 561h1v1h-1zM1092 562h1v1h-1zM1092 568h1v1h-1zM1092 572h1v1h-1zM1092 573h1v1h-1zM1092 574h1v1h-1zM1092 578h1v1h-1zM1092 579h1v1h-1zM1092 580h1v1h-1zM1092 584h1v1h-1zM1092 585h1v1h-1zM1092 586h1v1h-1zM1092 590h1v1h-1zM1092 591h1v1h-1zM1092 592h1v1h-1zM1092 596h1v1h-1zM1092 597h1v1h-1zM1092 598h1v1h-1zM1092 602h1v1h-1zM1092 603h1v1h-1zM1092 604h1v1h-1zM1092 608h1v1h-1zM1092 609h1v1h-1zM1092 610h1v1h-1z" fill="#ffffff"/>
<path d="M1092 566h1v1h-1zM77 610h1v1h-1zM78 610h1v1h-1zM79 610h1v1h-1zM83 610h1v1h-1zM84 610h1v1h-1zM85 610h1v1h-1zM89 610h1v1h-1zM90 610h1v1h-1zM91 610h1v1h-1zM95 610h1v1h-1zM96 610h1v1h-1zM97 610h1v1h-1zM101 610h1v1h-1zM102 610h1v1h-1zM103 610h1v1h-1zM107 610h1v1h-1zM108 610h1v1h-1zM109 610h1v1h-1zM113 610h1v1h-1zM114 610h1v1h-1zM115 610h1v1h-1zM119 610h1v1h-1zM120 610h1v1h-1zM121 610h1v1h-1zM125 610h1v1h-1zM126 610h1v1h-1zM127 610h1v1h-1zM131 610h1v1h-1zM132 610h1v1h-1zM133 610h1v1h-1zM137 610h1v1h-1zM138 610h1v1h-1zM139 610h1v1h-1zM143 610h1v1h-1zM144 610h1v1h-1zM145 610h1v1h-1zM149 610h1v1h-1zM150 610h1v1h-1zM151 610h1v1h-1zM155 610h1v1h-1zM156 610h1v1h-1zM157 610h1v1h-1zM161 610h1v1h-1zM162 610h1v1h-1zM163 610h1v1h-1zM167 610h1v1h-1zM168 610h1v1h-1zM169 610h1v1h-1zM173 610h1v1h-1zM174 610h1v1h-1zM175 610h1v1h-1zM179 610h1v1h-1zM180 610h1v1h-1zM181 610h1v1h-1zM185 610h1v1h-1zM186 610h1v1h-1zM187 610h1v1h-1zM191 610h1v1h-1zM192 610h1v1h-1zM193 610h1v1h-1zM197 610h1v1h-1zM198 610h1v1h-1zM199 610h1v1h-1zM203 610h1v1h-1zM204 610h1v1h-1zM205 610h1v1h-1zM209 610h1v1h-1zM210 610h1v1h-1zM211 610h1v1h-1zM215 610h1v1h-1zM216 610h1v1h-1zM217 610h1v1h-1zM221 610h1v1h-1zM222 610h1v1h-1zM223 610h1v1h-1zM227 610h1v1h-1zM228 610h1v1h-1zM229 610h1v1h-1zM233 610h1v1h-1zM234 610h1v1h-1zM235 610h1v1h-1zM239 610h1v1h-1zM240 610h1v1h-1zM241 610h1v1h-1zM245 610h1v1h-1zM246 610h1v1h-1zM247 610h1v1h-1zM251 610h1v1h-1zM252 610h1v1h-1zM253 610h1v1h-1zM257 610h1v1h-1zM258 610h1v1h-1zM259 610h1v1h-1zM263 610h1v1h-1zM264 610h1v1h-1zM265 610h1v1h-1zM269 610h1v1h-1zM270 610h1v1h-1zM271 610h1v1h-1zM275 610h1v1h-1zM276 610h1v1h-1zM277 610h1v1h-1zM281 610h1v1h-1zM282 610h1v1h-1zM283 610h1v1h-1zM287 610h1v1h-1zM288 610h1v1h-1zM289 610h1v1h-1zM293 610h1v1h-1zM294 610h1v1h-1zM295 610h1v1h-1zM299 610h1v1h-1zM300 610h1v1h-1zM301 610h1v1h-1zM305 610h1v1h-1zM306 610h1v1h-1zM307 610h1v1h-1zM311 610h1v1h-1zM312 610h1v1h-1zM313 610h1v1h-1zM317 610h1v1h-1zM318 610h1v1h-1zM319 610h1v1h-1zM323 610h1v1h-1zM324 610h1v1h-1zM325 610h1v1h-1zM329 610h1v1h-1zM330 610h1v1h-1zM331 610h1v1h-1zM335 610h1v1h-1zM336 610h1v1h-1zM337 610h1v1h-1zM341 610h1v1h-1zM342 610h1v1h-1zM343 610h1v1h-1zM347 610h1v1h-1zM348 610h1v1h-1zM349 610h1v1h-1zM353 610h1v1h-1zM354 610h1v1h-1zM355 610h1v1h-1zM359 610h1v1h-1zM360 610h1v1h-1zM361 610h1v1h-1zM365 610h1v1h-1zM366 610h1v1h-1zM367 610h1v1h-1zM371 610h1v1h-1zM372 610h1v1h-1zM373 610h1v1h-1zM377 610h1v1h-1zM378 610h1v1h-1zM379 610h1v1h-1zM383 610h1v1h-1zM384 610h1v1h-1zM385 610h1v1h-1zM389 610h1v1h-1zM390 610h1v1h-1zM391 610h1v1h-1zM395 610h1v1h-1zM396 610h1v1h-1zM397 610h1v1h-1zM401 610h1v1h-1zM402 610h1v1h-1zM403 610h1v1h-1zM407 610h1v1h-1zM408 610h1v1h-1zM409 610h1v1h-1zM413 610h1v1h-1zM414 610h1v1h-1zM415 610h1v1h-1zM419 610h1v1h-1zM420 610h1v1h-1zM421 610h1v1h-1zM425 610h1v1h-1zM426 610h1v1h-1zM427 610h1v1h-1zM431 610h1v1h-1zM432 610h1v1h-1zM433 610h1v1h-1zM437 610h1v1h-1zM438 610h1v1h-1zM439 610h1v1h-1zM443 610h1v1h-1zM444 610h1v1h-1zM445 610h1v1h-1zM449 610h1v1h-1zM450 610h1v1h-1zM451 610h1v1h-1zM455 610h1v1h-1zM456 610h1v1h-1zM457 610h1v1h-1zM461 610h1v1h-1zM462 610h1v1h-1zM463 610h1v1h-1zM467 610h1v1h-1zM468 610h1v1h-1zM469 610h1v1h-1zM473 610h1v1h-1zM474 610h1v1h-1zM475 610h1v1h-1zM479 610h1v1h-1zM480 610h1v1h-1zM481 610h1v1h-1zM485 610h1v1h-1zM486 610h1v1h-1zM487 610h1v1h-1zM491 610h1v1h-1zM492 610h1v1h-1zM493 610h1v1h-1zM497 610h1v1h-1zM498 610h1v1h-1zM499 610h1v1h-1zM503 610h1v1h-1zM504 610h1v1h-1zM505 610h1v1h-1zM509 610h1v1h-1zM510 610h1v1h-1zM511 610h1v1h-1zM515 610h1v1h-1zM516 610h1v1h-1zM517 610h1v1h-1zM521 610h1v1h-1zM522 610h1v1h-1zM523 610h1v1h-1zM527 610h1v1h-1zM528 610h1v1h-1zM529 610h1v1h-1zM533 610h1v1h-1zM534 610h1v1h-1zM535 610h1v1h-1zM539 610h1v1h-1zM540 610h1v1h-1zM541 610h1v1h-1zM545 610h1v1h-1zM546 610h1v1h-1zM547 610h1v1h-1zM551 610h1v1h-1zM552 610h1v1h-1zM553 610h1v1h-1zM557 610h1v1h-1zM558 610h1v1h-1zM559 610h1v1h-1zM563 610h1v1h-1zM564 610h1v1h-1zM565 610h1v1h-1zM569 610h1v1h-1zM570 610h1v1h-1zM571 610h1v1h-1zM575 610h1v1h-1zM576 610h1v1h-1zM577 610h1v1h-1zM581 610h1v1h-1zM582 610h1v1h-1zM583 610h1v1h-1zM587 610h1v1h-1zM588 610h1v1h-1zM589 610h1v1h-1zM593 610h1v1h-1zM594 610h1v1h-1zM595 610h1v1h-1zM599 610h1v1h-1zM600 610h1v1h-1zM601 610h1v1h-1zM605 610h1v1h-1zM606 610h1v1h-1zM607 610h1v1h-1zM611 610h1v1h-1zM612 610h1v1h-1zM613 610h1v1h-1zM617 610h1v1h-1zM618 610h1v1h-1zM619 610h1v1h-1zM623 610h1v1h-1zM624 610h1v1h-1zM625 610h1v1h-1zM629 610h1v1h-1zM630 610h1v1h-1zM631 610h1v1h-1zM635 610h1v1h-1zM636 610h1v1h-1zM637 610h1v1h-1zM641 610h1v1h-1zM642 610h1v1h-1zM643 610h1v1h-1zM647 610h1v1h-1zM648 610h1v1h-1zM649 610h1v1h-1zM653 610h1v1h-1zM654 610h1v1h-1zM655 610h1v1h-1zM659 610h1v1h-1zM660 610h1v1h-1zM661 610h1v1h-1zM665 610h1v1h-1zM666 610h1v1h-1zM667 610h1v1h-1zM671 610h1v1h-1zM672 610h1v1h-1zM673 610h1v1h-1zM677 610h1v1h-1zM678 610h1v1h-1zM679 610h1v1h-1zM683 610h1v1h-1zM684 610h1v1h-1zM685 610h1v1h-1zM689 610h1v1h-1zM690 610h1v1h-1zM691 610h1v1h-1zM695 610h1v1h-1zM696 610h1v1h-1zM697 610h1v1h-1zM701 610h1v1h-1zM702 610h1v1h-1zM703 610h1v1h-1zM707 610h1v1h-1zM708 610h1v1h-1zM709 610h1v1h-1zM713 610h1v1h-1zM714 610h1v1h-1zM715 610h1v1h-1zM719 610h1v1h-1zM720 610h1v1h-1zM721 610h1v1h-1zM725 610h1v1h-1zM726 610h1v1h-1zM727 610h1v1h-1zM731 610h1v1h-1zM732 610h1v1h-1zM733 610h1v1h-1zM737 610h1v1h-1zM738 610h1v1h-1zM739 610h1v1h-1zM743 610h1v1h-1zM744 610h1v1h-1zM745 610h1v1h-1zM749 610h1v1h-1zM750 610h1v1h-1zM751 610h1v1h-1zM755 610h1v1h-1zM756 610h1v1h-1zM757 610h1v1h-1zM761 610h1v1h-1zM762 610h1v1h-1zM763 610h1v1h-1zM767 610h1v1h-1zM768 610h1v1h-1zM769 610h1v1h-1zM773 610h1v1h-1zM774 610h1v1h-1zM775 610h1v1h-1zM779 610h1v1h-1zM780 610h1v1h-1zM781 610h1v1h-1zM785 610h1v1h-1zM786 610h1v1h-1zM787 610h1v1h-1zM791 610h1v1h-1zM792 610h1v1h-1zM793 610h1v1h-1zM797 610h1v1h-1zM798 610h1v1h-1zM799 610h1v1h-1zM803 610h1v1h-1zM804 610h1v1h-1zM805 610h1v1h-1zM809 610h1v1h-1zM810 610h1v1h-1zM811 610h1v1h-1zM815 610h1v1h-1zM816 610h1v1h-1zM817 610h1v1h-1zM821 610h1v1h-1zM822 610h1v1h-1zM823 610h1v1h-1zM827 610h1v1h-1zM828 610h1v1h-1zM829 610h1v1h-1zM833 610h1v1h-1zM834 610h1v1h-1zM835 610h1v1h-1zM839 610h1v1h-1zM840 610h1v1h-1zM841 610h1v1h-1zM845 610h1v1h-1zM846 610h1v1h-1zM847 610h1v1h-1zM851 610h1v1h-1zM852 610h1v1h-1zM853 610h1v1h-1zM857 610h1v1h-1zM858 610h1v1h-1zM859 610h1v1h-1zM863 610h1v1h-1zM864 610h1v1h-1zM865 610h1v1h-1zM869 610h1v1h-1zM870 610h1v1h-1zM871 610h1v1h-1zM875 610h1v1h-1zM876 610h1v1h-1zM877 610h1v1h-1zM881 610h1v1h-1zM882 610h1v1h-1zM883 610h1v1h-1zM887 610h1v1h-1zM888 610h1v1h-1zM889 610h1v1h-1zM893 610h1v1h-1zM894 610h1v1h-1zM895 610h1v1h-1zM899 610h1v1h-1zM900 610h1v1h-1zM901 610h1v1h-1zM905 610h1v1h-1zM906 610h1v1h-1zM907 610h1v1h-1zM911 610h1v1h-1zM912 610h1v1h-1zM913 610h1v1h-1zM917 610h1v1h-1zM918 610h1v1h-1zM919 610h1v1h-1zM923 610h1v1h-1zM924 610h1v1h-1zM925 610h1v1h-1zM929 610h1v1h-1zM930 610h1v1h-1zM931 610h1v1h-1zM935 610h1v1h-1zM936 610h1v1h-1zM937 610h1v1h-1zM941 610h1v1h-1zM942 610h1v1h-1zM943 610h1v1h-1zM947 610h1v1h-1zM948 610h1v1h-1zM949 610h1v1h-1zM768 560h1v1h-1zM768 610h1v1h-1zM1092 266h1v1h-1zM1092 268h1v1h-1zM1092 566h1v1h-1zM1092 567h1v1h-1z" fill="#ff00ff"/>
<rect x="653.5" y="9.5" width="71" height="25" fill="none" stroke="#808080" stroke-width="1"/>
<rect x="653.5" y="9.5" width="71" height="25" fill="none" stroke="#ffffff" stroke-width="1" stroke-dasharray="3 3" stroke-dashoffset="-2"/>
<text transform="translate(655.0,27.6) scale(0.975,1)" font-family="Liberation Sans" font-weight="bold" font-size="21" fill="#00ff00" shape-rendering="auto">V(vut3)</text>
<g font-family="Liberation Sans" font-weight="bold" font-size="21" fill="#c0c0c0" shape-rendering="auto">
<text transform="translate(62.3,42) scale(0.92,1)" text-anchor="end">-20dB</text>
<text transform="translate(62.3,100) scale(0.92,1)" text-anchor="end">-24dB</text>
<text transform="translate(62.3,158) scale(0.92,1)" text-anchor="end">-28dB</text>
<text transform="translate(62.3,215) scale(0.92,1)" text-anchor="end">-32dB</text>
<text transform="translate(62.3,273) scale(0.92,1)" text-anchor="end">-36dB</text>
<text transform="translate(62.3,331) scale(0.92,1)" text-anchor="end">-40dB</text>
<text transform="translate(62.3,389) scale(0.92,1)" text-anchor="end">-44dB</text>
<text transform="translate(62.3,447) scale(0.92,1)" text-anchor="end">-48dB</text>
<text transform="translate(62.3,504) scale(0.92,1)" text-anchor="end">-52dB</text>
<text transform="translate(62.3,562) scale(0.92,1)" text-anchor="end">-56dB</text>
<text transform="translate(62.3,620) scale(0.92,1)" text-anchor="end">-60dB</text>
<text transform="translate(1360.3,42) scale(0.92,1)" text-anchor="end">100°</text>
<text transform="translate(1360.3,95) scale(0.92,1)" text-anchor="end">90°</text>
<text transform="translate(1360.3,147) scale(0.92,1)" text-anchor="end">80°</text>
<text transform="translate(1360.3,200) scale(0.92,1)" text-anchor="end">70°</text>
<text transform="translate(1360.3,252) scale(0.92,1)" text-anchor="end">60°</text>
<text transform="translate(1360.3,305) scale(0.92,1)" text-anchor="end">50°</text>
<text transform="translate(1360.3,357) scale(0.92,1)" text-anchor="end">40°</text>
<text transform="translate(1360.3,410) scale(0.92,1)" text-anchor="end">30°</text>
<text transform="translate(1360.3,462) scale(0.92,1)" text-anchor="end">20°</text>
<text transform="translate(1360.3,515) scale(0.92,1)" text-anchor="end">10°</text>
<text transform="translate(1360.3,567) scale(0.92,1)" text-anchor="end">0°</text>
<text transform="translate(1360.3,620) scale(0.92,1)" text-anchor="end">-10°</text>
<text transform="translate(74.5,644) scale(0.92,1)" text-anchor="middle">1Hz</text>
<text transform="translate(197.5,644) scale(0.92,1)" text-anchor="middle">10Hz</text>
<text transform="translate(320.5,644) scale(0.92,1)" text-anchor="middle">100Hz</text>
<text transform="translate(443.5,644) scale(0.92,1)" text-anchor="middle">1KHz</text>
<text transform="translate(566.5,644) scale(0.92,1)" text-anchor="middle">10KHz</text>
<text transform="translate(690.5,644) scale(0.92,1)" text-anchor="middle">100KHz</text>
<text transform="translate(813.5,644) scale(0.92,1)" text-anchor="middle">1MHz</text>
<text transform="translate(936.5,644) scale(0.92,1)" text-anchor="middle">10MHz</text>
<text transform="translate(1059.5,644) scale(0.92,1)" text-anchor="middle">100MHz</text>
<text transform="translate(1182.5,644) scale(0.92,1)" text-anchor="middle">1GHz</text>
<text transform="translate(1305.5,644) scale(0.92,1)" text-anchor="middle">10GHz</text>
</g>
<g shape-rendering="crispEdges">
<rect x="209" y="61" width="441" height="462" fill="#ffffff"/>
<rect x="210" y="105" width="439" height="416" fill="#f0f0f0"/>
<rect x="210" y="521" width="439" height="1" fill="#e3e3e3"/>
<rect x="210" y="115" width="7" height="1" fill="#dcdcdc"/>
<rect x="280" y="115" width="369" height="1" fill="#dcdcdc"/>
<rect x="210" y="248" width="439" height="1" fill="#dcdcdc"/>
<rect x="210" y="260" width="7" height="1" fill="#dcdcdc"/>
<rect x="280" y="260" width="369" height="1" fill="#dcdcdc"/>
<rect x="210" y="393" width="439" height="1" fill="#dcdcdc"/>
<rect x="210" y="408" width="130" height="1" fill="#dcdcdc"/>
<rect x="522" y="408" width="127" height="1" fill="#dcdcdc"/>
<rect x="256" y="150" width="137" height="30" fill="#ffffff"/>
<rect x="256.5" y="150.5" width="136" height="29" fill="none" stroke="#7a7a7a" stroke-width="1"/>
<rect x="459" y="150" width="162" height="30" fill="#ffffff"/>
<rect x="459" y="150" width="161" height="1" fill="#7a7a7a"/>
<rect x="459" y="150" width="1" height="29" fill="#7a7a7a"/>
<rect x="459" y="183" width="162" height="30" fill="#ffffff"/>
<rect x="459" y="183" width="161" height="1" fill="#7a7a7a"/>
<rect x="459" y="183" width="1" height="29" fill="#7a7a7a"/>
<rect x="459" y="215" width="162" height="30" fill="#ffffff"/>
<rect x="459.5" y="215.5" width="161" height="29" fill="none" stroke="#7a7a7a" stroke-width="1"/>
<rect x="259" y="295" width="137" height="30" fill="#ffffff"/>
<rect x="259.5" y="295.5" width="136" height="29" fill="none" stroke="#7a7a7a" stroke-width="1"/>
<rect x="461" y="295" width="162" height="30" fill="#ffffff"/>
<rect x="461" y="295" width="161" height="1" fill="#7a7a7a"/>
<rect x="461" y="295" width="1" height="29" fill="#7a7a7a"/>
<rect x="461" y="328" width="162" height="29" fill="#ffffff"/>
<rect x="461" y="328" width="161" height="1" fill="#7a7a7a"/>
<rect x="461" y="328" width="1" height="28" fill="#7a7a7a"/>
<rect x="461" y="360" width="162" height="30" fill="#ffffff"/>
<rect x="461.5" y="360.5" width="161" height="29" fill="none" stroke="#7a7a7a" stroke-width="1"/>
<rect x="259" y="423" width="137" height="30" fill="#ffffff"/>
<rect x="259.5" y="423.5" width="136" height="29" fill="none" stroke="#7a7a7a" stroke-width="1"/>
<rect x="461" y="423" width="162" height="30" fill="#ffffff"/>
<rect x="461.5" y="423.5" width="161" height="29" fill="none" stroke="#7a7a7a" stroke-width="1"/>
<rect x="461" y="455" width="162" height="30" fill="#ffffff"/>
<rect x="461.5" y="455.5" width="161" height="29" fill="none" stroke="#7a7a7a" stroke-width="1"/>
<rect x="461" y="488" width="162" height="30" fill="#ffffff"/>
<rect x="461.5" y="488.5" width="161" height="29" fill="none" stroke="#7a7a7a" stroke-width="1"/>
</g>
<g shape-rendering="geometricPrecision">
<circle cx="637" cy="166" r="8.4" fill="#fff" stroke="#333" stroke-width="1.15"/>
<circle cx="637" cy="166" r="4.6" fill="#333"/>
<circle cx="637" cy="199" r="8.4" fill="#fff" stroke="#333" stroke-width="1.15"/>
<circle cx="637" cy="231" r="8.4" fill="#fcfcfc" stroke="#c6c6c6" stroke-width="1"/>
<circle cx="637" cy="308.8" r="8.4" fill="#fff" stroke="#333" stroke-width="1.15"/>
<circle cx="637" cy="308.8" r="4.6" fill="#333"/>
<circle cx="637" cy="340.8" r="8.4" fill="#fff" stroke="#333" stroke-width="1.15"/>
<circle cx="637" cy="373.8" r="8.4" fill="#fcfcfc" stroke="#c6c6c6" stroke-width="1"/>
</g>
<path d="M618.5 75.5L632.5 89.5M632.5 75.5L618.5 89.5" stroke="#7d7d7d" stroke-width="1" fill="none" shape-rendering="geometricPrecision"/>
<rect x="220" y="70" width="2" height="24" fill="#808080" shape-rendering="crispEdges"/>
<g shape-rendering="geometricPrecision">
<path d="M220.8 70.6L225.8 74M220.9 93L238.6 81.6" stroke="#111" stroke-width="1.5" fill="none"/>
<path d="M229.3 70.5L232 70.4L229.6 74.5L229.2 77.6L230.6 80.2L233.2 80.6L232.9 81.9L223.1 81.9L226.2 76.8L228 72.3Z" fill="#8a0000"/>
<path d="M233 70.3L243.4 70.3L236.4 81.7L234 81.7L237.9 72L233.4 72Z" fill="#8a0000"/>
</g>
<g font-family="Liberation Sans">
<text transform="translate(250.00,90) scale(1.0098,1)" font-size="17.7" fill="#999999" >attenuator 54db.asc</text>
<text transform="translate(218.00,121) scale(0.9324,1)" font-size="16.5" fill="#000" >Cursor 1</text>
<text transform="translate(379.70,139) scale(0.9291,1)" font-size="17" fill="#000" >V(vut3)</text>
<text transform="translate(215.70,171) scale(0.9170,1)" font-size="17" fill="#000" >Freq:</text>
<text transform="translate(271.00,169) scale(0.9584,1)" font-size="17" fill="#000" >434.20311KHz</text>
<text transform="translate(415.50,171) scale(0.9158,1)" font-size="17" fill="#000" >Mag:</text>
<text transform="translate(489.60,171.5) scale(0.9513,1)" font-size="17" fill="#000" >-59.776957dB</text>
<text transform="translate(401.60,204) scale(0.9185,1)" font-size="17" fill="#000" >Phase:</text>
<text transform="translate(490.90,204.5) scale(0.9781,1)" font-size="17" fill="#000" >150.88887m°</text>
<text transform="translate(357.50,238) scale(0.9254,1)" font-size="17" fill="#000" >Group Delay:</text>
<text transform="translate(491.20,234) scale(0.9414,1)" font-size="17" fill="#000" >-965.29625ps</text>
<text transform="translate(218.30,266) scale(0.9498,1)" font-size="16.5" fill="#000" >Cursor 2</text>
<text transform="translate(381.70,284) scale(0.9310,1)" font-size="17" fill="#000" >V(vut3)</text>
<text transform="translate(218.70,316) scale(0.9145,1)" font-size="17" fill="#000" >Freq:</text>
<text transform="translate(274.80,314) scale(0.9358,1)" font-size="17" fill="#000" >186.07989MHz</text>
<text transform="translate(418.50,316) scale(0.9158,1)" font-size="17" fill="#000" >Mag:</text>
<text transform="translate(491.50,316.5) scale(0.9485,1)" font-size="17" fill="#000" >-56.758868dB</text>
<text transform="translate(404.50,349) scale(0.9166,1)" font-size="17" fill="#000" >Phase:</text>
<text transform="translate(499.50,349.5) scale(1.0081,1)" font-size="17" fill="#000" >56.111029°</text>
<text transform="translate(360.80,382) scale(0.9204,1)" font-size="17" fill="#000" >Group Delay:</text>
<text transform="translate(493.10,379) scale(0.9462,1)" font-size="17" fill="#000" >-631.23218ps</text>
<text transform="translate(343.00,414) scale(0.9202,1)" font-size="17" fill="#000" >Ratio (Cursor2 / Cursor1)</text>
<text transform="translate(218.60,444) scale(0.9220,1)" font-size="17" fill="#000" >Freq:</text>
<text transform="translate(274.70,441.5) scale(0.9393,1)" font-size="17" fill="#000" >185.64568MHz</text>
<text transform="translate(418.50,444) scale(0.9158,1)" font-size="17" fill="#000" >Mag:</text>
<text transform="translate(494.40,442) scale(0.9491,1)" font-size="17" fill="#000" >3.0180899dB</text>
<text transform="translate(404.50,475.5) scale(0.9166,1)" font-size="17" fill="#000" >Phase:</text>
<text transform="translate(501.30,474) scale(0.9338,1)" font-size="17" fill="#000" >55.960141°</text>
<text transform="translate(360.80,510) scale(0.9204,1)" font-size="17" fill="#000" >Group Delay:</text>
<text transform="translate(495.50,506) scale(0.9410,1)" font-size="17" fill="#000" >334.06407ps</text>
</g>
</svg></body></html>
